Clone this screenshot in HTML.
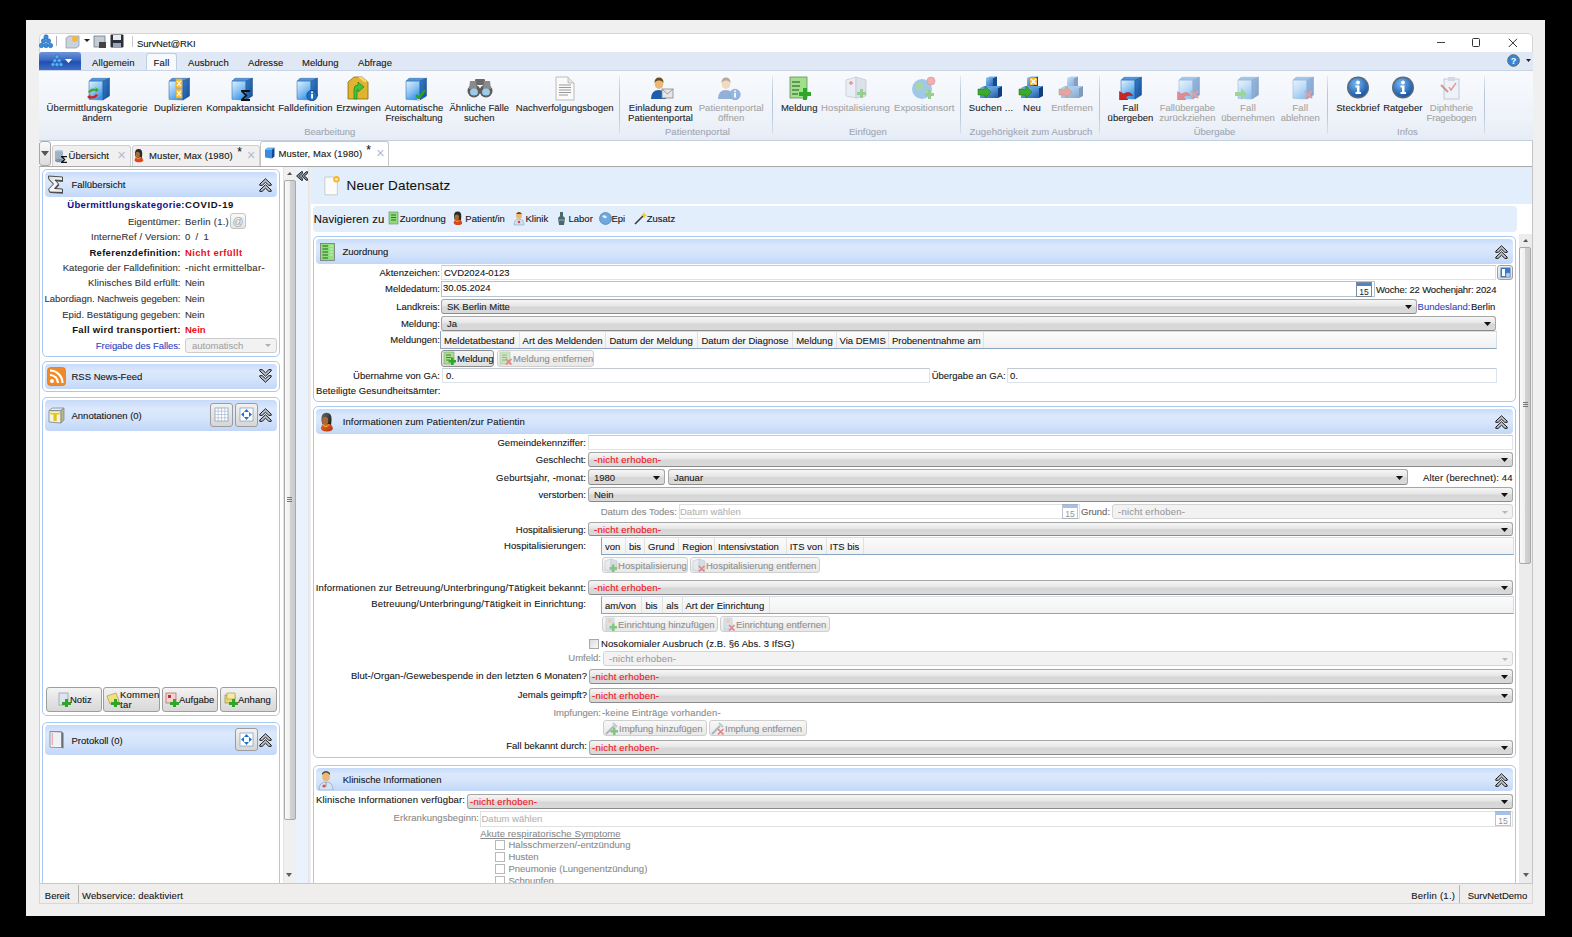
<!DOCTYPE html><html><head><meta charset="utf-8"><style>
html,body{margin:0;padding:0;width:1572px;height:937px;overflow:hidden;background:#000;font-family:"Liberation Sans", sans-serif;}
div,svg{position:absolute;box-sizing:border-box;}
.t{white-space:nowrap;color:#111;-webkit-text-stroke:0.1px currentColor;}

</style></head><body>
<div style="left:26px;top:20px;width:1519px;height:896px;background:#f0f0f0;"></div>
<div style="left:39px;top:33px;width:1494px;height:871px;background:#fff;border:1px solid #d6d6d6;border-radius:5px 5px 0 0;"></div>
<svg style="left:39px;top:34px" width="14" height="16" viewBox="0 0 14 16"><g fill="#3a8ee0" stroke="#1b5fa8" stroke-width="0.6"><circle cx="7" cy="3" r="2.2"/><circle cx="4.5" cy="7" r="2.2"/><circle cx="9.5" cy="7" r="2.2"/><circle cx="2.5" cy="11.5" r="2.2"/><circle cx="7" cy="11.5" r="2.2"/><circle cx="11.5" cy="11.5" r="2.2"/></g></svg>
<div style="left:56px;top:36px;width:1px;height:10px;background:#b0b0b0;"></div>
<svg style="left:65px;top:35px" width="15" height="14" viewBox="0 0 15 14"><path d="M1 3 L4 1 L14 1 L14 11 L11 13 L1 13Z" fill="#c9d3de" stroke="#8a97a6" stroke-width="0.7"/><circle cx="10" cy="4" r="3" fill="#f5b93a"/></svg>
<svg style="left:84px;top:39px" width="6" height="4"><path d="M0 0 L6 0 L3 3Z" fill="#222"/></svg>
<svg style="left:93px;top:35px" width="14" height="14" viewBox="0 0 14 14"><rect x="1" y="1" width="11" height="11" fill="#c4ccd6" stroke="#6f7c8c" stroke-width="0.8"/><rect x="6" y="7" width="7" height="6" fill="#444"/></svg>
<svg style="left:110px;top:34px" width="14" height="15" viewBox="0 0 14 15"><rect x="0.5" y="0.5" width="13" height="13" rx="1" fill="#2a2f3a"/><rect x="3" y="1" width="8" height="5" fill="#e8ecf2"/><rect x="3" y="9" width="8" height="4.5" fill="#9aa6b5"/></svg>
<div style="left:132px;top:36px;width:1px;height:11px;background:#c8c8c8;"></div>
<div class="t" style="left:137px;top:38.0px;font-size:9.5px;line-height:11px;color:#151515;letter-spacing:-0.121px;">SurvNet@RKI</div>
<div style="left:1437px;top:42px;width:8px;height:1px;background:#444;"></div>
<div style="left:1472px;top:38px;width:8px;height:9px;border:1px solid #333;border-radius:1.5px;"></div>
<svg style="left:1507.5px;top:38px" width="10" height="10" viewBox="0 0 10 10"><path d="M0.8 0.8 L9 9 M9 0.8 L0.8 9" stroke="#333" stroke-width="1"/></svg>
<div style="left:39px;top:52px;width:1494px;height:18px;background:#dfe8f4;"></div>
<div style="left:39px;top:52px;width:42px;height:18px;background:linear-gradient(#6d95d8,#3a69c4 45%,#1f4fb0 55%,#3f6fc8);border-radius:3px 3px 0 0;"></div>
<svg style="left:51px;top:54px" width="14" height="14" viewBox="0 0 14 14"><g fill="#58b0f5" stroke="#1c5aa6" stroke-width="0.5"><circle cx="6" cy="2.8" r="2"/><circle cx="3.8" cy="6.6" r="2"/><circle cx="8.2" cy="6.6" r="2"/><circle cx="2" cy="10.6" r="2"/><circle cx="6" cy="10.6" r="2"/><circle cx="10" cy="10.6" r="2"/></g></svg>
<svg style="left:65px;top:59px" width="7" height="4"><path d="M0 0 L7 0 L3.5 4Z" fill="#fff"/></svg>
<div style="left:146px;top:53px;width:31px;height:18px;background:#f6f9fd;border:1px solid #bfcde0;border-bottom:none;border-radius:3px 3px 0 0;"></div>
<div class="t" style="left:92px;top:57.2px;font-size:9.5px;line-height:11px;color:#151515;letter-spacing:0.110px;">Allgemein</div>
<div class="t" style="left:153.5px;top:57.2px;font-size:9.5px;line-height:11px;color:#151515;letter-spacing:0.196px;">Fall</div>
<div class="t" style="left:188px;top:57.2px;font-size:9.5px;line-height:11px;color:#151515;letter-spacing:0.080px;">Ausbruch</div>
<div class="t" style="left:248px;top:57.2px;font-size:9.5px;line-height:11px;color:#151515;letter-spacing:0.073px;">Adresse</div>
<div class="t" style="left:302px;top:57.2px;font-size:9.5px;line-height:11px;color:#151515;letter-spacing:0.008px;">Meldung</div>
<div class="t" style="left:358px;top:57.2px;font-size:9.5px;line-height:11px;color:#151515;letter-spacing:0.120px;">Abfrage</div>
<svg style="left:1507px;top:54px" width="13" height="13" viewBox="0 0 13 13"><circle cx="6.5" cy="6.5" r="5.8" fill="#3a86d0" stroke="#5a6470" stroke-width="1"/><text x="6.5" y="10" font-size="9" font-weight="bold" text-anchor="middle" fill="#fff" font-family="Liberation Sans">?</text></svg>
<svg style="left:1526px;top:59px" width="5" height="3"><path d="M0 0 L5 0 L2.5 3Z" fill="#222"/></svg>
<div style="left:39px;top:70px;width:1494px;height:71px;background:linear-gradient(#f8fafd,#eef2f9 70%,#e6ecf6);border-bottom:1px solid #c3d0e2;border-top:1px solid #c8d5e6;"></div>
<svg style="left:86px;top:77px;opacity:1.0" width="24" height="24" viewBox="0 0 24 24"><defs><linearGradient id="g1" x1="0" y1="0" x2="0.6" y2="1"><stop offset="0" stop-color="#e2f1fd"/><stop offset="0.55" stop-color="#8cc4f4"/><stop offset="1" stop-color="#3a94e6"/></linearGradient><linearGradient id="g2" x1="0" y1="0" x2="1" y2="1"><stop offset="0" stop-color="#3580cc"/><stop offset="1" stop-color="#174c92"/></linearGradient></defs><path d="M3 4.2 L6 1.3 L23.5 1.3 L17 4.2Z" fill="#4f96dc" stroke="#2a64a8" stroke-width="0.5"/><path d="M3 4.2 L17 4.2 L17 23 L3 22.3Z" fill="url(#g1)" stroke="#3a78b8" stroke-width="0.6"/><path d="M17 4.2 L23.5 1.3 L23.5 19 L17 23Z" fill="url(#g2)" stroke="#1a4a86" stroke-width="0.5"/><path d="M2 15 Q5 10 10 12 L9 10 L13 13 L9 16 L10 14 Q6 13 4 16Z" fill="#3caa2a"/><path d="M12 18 Q9 23 4 21 L5 23 L1 20 L5 17 L4 19 Q8 20 10 17Z" fill="#d42020"/></svg>
<div class="t" style="left:27.0px;top:101.8px;width:140px;text-align:center;font-size:9.5px;line-height:11px;color:#1e1e1e;letter-spacing:0.158px;text-indent:0.158px;"><span style="position:static">Übermittlungskategorie</span></div>
<div class="t" style="left:27.0px;top:111.9px;width:140px;text-align:center;font-size:9.5px;line-height:11px;color:#1e1e1e;"><span style="position:static">ändern</span></div>
<svg style="left:166px;top:77px;opacity:1.0" width="24" height="24" viewBox="0 0 24 24"><defs><linearGradient id="g3" x1="0" y1="0" x2="0.6" y2="1"><stop offset="0" stop-color="#e2f1fd"/><stop offset="0.55" stop-color="#8cc4f4"/><stop offset="1" stop-color="#3a94e6"/></linearGradient><linearGradient id="g4" x1="0" y1="0" x2="1" y2="1"><stop offset="0" stop-color="#3580cc"/><stop offset="1" stop-color="#174c92"/></linearGradient></defs><path d="M3 4.2 L6 1.3 L23.5 1.3 L17 4.2Z" fill="#4f96dc" stroke="#2a64a8" stroke-width="0.5"/><path d="M3 4.2 L17 4.2 L17 23 L3 22.3Z" fill="url(#g3)" stroke="#3a78b8" stroke-width="0.6"/><path d="M17 4.2 L23.5 1.3 L23.5 19 L17 23Z" fill="url(#g4)" stroke="#1a4a86" stroke-width="0.5"/><g fill="#f6c23a" stroke="#f59b1a" stroke-width="0.6"><rect x="10" y="2" width="6" height="9"/><rect x="10" y="12" width="6" height="9"/></g><path d="M11 4 L15 9 M15 4 L11 9 M11 14 L15 19 M15 14 L11 19" stroke="#fff" stroke-width="1.2"/></svg>
<div class="t" style="left:108.0px;top:101.8px;width:140px;text-align:center;font-size:9.5px;line-height:11px;color:#1e1e1e;letter-spacing:0.057px;text-indent:0.057px;"><span style="position:static">Duplizieren</span></div>
<svg style="left:229px;top:77px;opacity:1.0" width="24" height="24" viewBox="0 0 24 24"><defs><linearGradient id="g5" x1="0" y1="0" x2="0.6" y2="1"><stop offset="0" stop-color="#e2f1fd"/><stop offset="0.55" stop-color="#8cc4f4"/><stop offset="1" stop-color="#3a94e6"/></linearGradient><linearGradient id="g6" x1="0" y1="0" x2="1" y2="1"><stop offset="0" stop-color="#3580cc"/><stop offset="1" stop-color="#174c92"/></linearGradient></defs><path d="M3 4.2 L6 1.3 L23.5 1.3 L17 4.2Z" fill="#4f96dc" stroke="#2a64a8" stroke-width="0.5"/><path d="M3 4.2 L17 4.2 L17 23 L3 22.3Z" fill="url(#g5)" stroke="#3a78b8" stroke-width="0.6"/><path d="M17 4.2 L23.5 1.3 L23.5 19 L17 23Z" fill="url(#g6)" stroke="#1a4a86" stroke-width="0.5"/><path d="M12 13 L21 13 L21 15 L15 15 L18.5 18.5 L15 22 L21 22 L21 24 L12 24 L12 22.5 L16 18.5 L12 14.5Z" fill="#111"/></svg>
<div class="t" style="left:170.3px;top:101.8px;width:140px;text-align:center;font-size:9.5px;line-height:11px;color:#1e1e1e;letter-spacing:0.054px;text-indent:0.054px;"><span style="position:static">Kompaktansicht</span></div>
<svg style="left:294px;top:77px;opacity:1.0" width="24" height="24" viewBox="0 0 24 24"><defs><linearGradient id="g7" x1="0" y1="0" x2="0.6" y2="1"><stop offset="0" stop-color="#e2f1fd"/><stop offset="0.55" stop-color="#8cc4f4"/><stop offset="1" stop-color="#3a94e6"/></linearGradient><linearGradient id="g8" x1="0" y1="0" x2="1" y2="1"><stop offset="0" stop-color="#3580cc"/><stop offset="1" stop-color="#174c92"/></linearGradient></defs><path d="M3 4.2 L6 1.3 L23.5 1.3 L17 4.2Z" fill="#4f96dc" stroke="#2a64a8" stroke-width="0.5"/><path d="M3 4.2 L17 4.2 L17 23 L3 22.3Z" fill="url(#g7)" stroke="#3a78b8" stroke-width="0.6"/><path d="M17 4.2 L23.5 1.3 L23.5 19 L17 23Z" fill="url(#g8)" stroke="#1a4a86" stroke-width="0.5"/><circle cx="18" cy="18.5" r="5.2" fill="#1e6fc4" stroke="#0b3e82" stroke-width="0.7"/><rect x="17.1" y="17" width="1.9" height="4.5" fill="#fff"/><circle cx="18" cy="15.3" r="1" fill="#fff"/></svg>
<div class="t" style="left:235.39999999999998px;top:101.8px;width:140px;text-align:center;font-size:9.5px;line-height:11px;color:#1e1e1e;letter-spacing:0.089px;text-indent:0.089px;"><span style="position:static">Falldefinition</span></div>
<svg style="left:346px;top:76px" width="24" height="25" viewBox="0 0 24 25"><path d="M2 6 L8 1 L16 1 L22 6 L22 23 L2 23Z" fill="#e0b430" stroke="#8a6a10" stroke-width="0.8"/><path d="M12 1 L16 1 L22 6 L18 6Z" fill="#f7d870"/><path d="M8 23 L8 13 Q8 9 12 9 L12 6 L18 11 L12 16 L12 13 Q11 13 11 15 L11 23Z" fill="#43c23a" stroke="#1f7a1a" stroke-width="0.6"/></svg>
<div class="t" style="left:288.5px;top:101.8px;width:140px;text-align:center;font-size:9.5px;line-height:11px;color:#1e1e1e;letter-spacing:0.030px;text-indent:0.030px;"><span style="position:static">Erzwingen</span></div>
<svg style="left:403px;top:77px;opacity:1.0" width="24" height="24" viewBox="0 0 24 24"><defs><linearGradient id="g9" x1="0" y1="0" x2="0.6" y2="1"><stop offset="0" stop-color="#e2f1fd"/><stop offset="0.55" stop-color="#8cc4f4"/><stop offset="1" stop-color="#3a94e6"/></linearGradient><linearGradient id="g10" x1="0" y1="0" x2="1" y2="1"><stop offset="0" stop-color="#3580cc"/><stop offset="1" stop-color="#174c92"/></linearGradient></defs><path d="M3 4.2 L6 1.3 L23.5 1.3 L17 4.2Z" fill="#4f96dc" stroke="#2a64a8" stroke-width="0.5"/><path d="M3 4.2 L17 4.2 L17 23 L3 22.3Z" fill="url(#g9)" stroke="#3a78b8" stroke-width="0.6"/><path d="M17 4.2 L23.5 1.3 L23.5 19 L17 23Z" fill="url(#g10)" stroke="#1a4a86" stroke-width="0.5"/><path d="M13 18 L16 21 L22 13" stroke="#2aa02a" stroke-width="2.4" fill="none"/><path d="M14 22 L17 22 L17 24 L14 24Z" fill="#ccc"/></svg>
<div class="t" style="left:344.0px;top:101.8px;width:140px;text-align:center;font-size:9.5px;line-height:11px;color:#1e1e1e;letter-spacing:0.103px;text-indent:0.103px;"><span style="position:static">Automatische</span></div>
<div class="t" style="left:344.0px;top:111.9px;width:140px;text-align:center;font-size:9.5px;line-height:11px;color:#1e1e1e;"><span style="position:static">Freischaltung</span></div>
<svg style="left:467px;top:77px" width="26" height="22" viewBox="0 0 26 22"><rect x="8" y="2" width="10" height="6" rx="1" fill="#6a6a6a"/><ellipse cx="7" cy="14" rx="6.5" ry="6.5" fill="#5c5c5c"/><ellipse cx="19" cy="14" rx="6.5" ry="6.5" fill="#5c5c5c"/><path d="M3 4 L9 4 L10 12 L2 12Z" fill="#8a8a8a"/><path d="M17 4 L23 4 L24 12 L16 12Z" fill="#8a8a8a"/><ellipse cx="7" cy="15" rx="4" ry="3.5" fill="#9ccbe8"/><ellipse cx="19" cy="15" rx="4" ry="3.5" fill="#9ccbe8"/></svg>
<div class="t" style="left:409.3px;top:101.8px;width:140px;text-align:center;font-size:9.5px;line-height:11px;color:#1e1e1e;letter-spacing:-0.013px;text-indent:-0.013px;"><span style="position:static">Ähnliche Fälle</span></div>
<div class="t" style="left:409.3px;top:111.9px;width:140px;text-align:center;font-size:9.5px;line-height:11px;color:#1e1e1e;"><span style="position:static">suchen</span></div>
<svg style="left:555px;top:76px" width="20" height="25" viewBox="0 0 20 25"><path d="M1 1 L13 1 L19 7 L19 24 L1 24Z" fill="#fafafa" stroke="#b4b4b4" stroke-width="0.9"/><path d="M13 1 L13 7 L19 7" fill="#e4e4e4" stroke="#b4b4b4" stroke-width="0.8"/><g stroke="#9a9a9a" stroke-width="1"><path d="M4 9 H16 M4 11.5 H16 M4 14 H16 M4 16.5 H16 M4 19 H13"/></g></svg>
<div class="t" style="left:494.70000000000005px;top:101.8px;width:140px;text-align:center;font-size:9.5px;line-height:11px;color:#1e1e1e;letter-spacing:-0.001px;text-indent:-0.001px;"><span style="position:static">Nachverfolgungsbogen</span></div>
<div class="t" style="left:229.8px;top:126.0px;width:200px;text-align:center;font-size:9.5px;line-height:11px;color:#9fa7b4;"><span style="position:static">Bearbeitung</span></div>
<div style="left:619px;top:76px;width:1px;height:58px;background:linear-gradient(rgba(180,195,215,0.3),#b9c7da 30%,#b9c7da 70%,rgba(180,195,215,0.3));"></div>
<svg style="left:650px;top:76px;opacity:1.0" width="24" height="24" viewBox="0 0 24 24"><path d="M1 23 Q1 14 9 14 Q16 14 16 23Z" fill="#1f5ea8"/><ellipse cx="9" cy="8" rx="4.3" ry="5" fill="#eab97a"/><path d="M4.5 7 Q4.5 1.5 9 1.5 Q13.5 1.5 13.5 7 Q12 4 9 4.5 Q6 4 4.5 7Z" fill="#6b4a1e"/><rect x="12" y="13" width="11" height="9" fill="#e6e6e6" stroke="#888" stroke-width="0.8"/><path d="M12 13 L17.5 18 L23 13" stroke="#888" stroke-width="0.8" fill="none"/></svg>
<div class="t" style="left:590.5px;top:101.8px;width:140px;text-align:center;font-size:9.5px;line-height:11px;color:#1e1e1e;letter-spacing:0.045px;text-indent:0.045px;"><span style="position:static">Einladung zum</span></div>
<div class="t" style="left:590.5px;top:111.9px;width:140px;text-align:center;font-size:9.5px;line-height:11px;color:#1e1e1e;letter-spacing:0.077px;text-indent:0.077px;"><span style="position:static">Patientenportal</span></div>
<svg style="left:717px;top:76px;opacity:0.45" width="24" height="24" viewBox="0 0 24 24"><path d="M1 23 Q1 14 9 14 Q16 14 16 23Z" fill="#1f5ea8"/><ellipse cx="9" cy="8" rx="4.3" ry="5" fill="#eab97a"/><path d="M4.5 7 Q4.5 1.5 9 1.5 Q13.5 1.5 13.5 7 Q12 4 9 4.5 Q6 4 4.5 7Z" fill="#6b4a1e"/><circle cx="18" cy="18.5" r="5.2" fill="#1e6fc4" stroke="#0b3e82" stroke-width="0.7"/><rect x="17.1" y="17" width="1.9" height="4.5" fill="#fff"/><circle cx="18" cy="15.3" r="1" fill="#fff"/></svg>
<div class="t" style="left:661.2px;top:101.8px;width:140px;text-align:center;font-size:9.5px;line-height:11px;color:#a5a5a5;letter-spacing:0.077px;text-indent:0.077px;"><span style="position:static">Patientenportal</span></div>
<div class="t" style="left:661.2px;top:111.9px;width:140px;text-align:center;font-size:9.5px;line-height:11px;color:#a5a5a5;"><span style="position:static">öffnen</span></div>
<div class="t" style="left:597.4px;top:126.0px;width:200px;text-align:center;font-size:9.5px;line-height:11px;color:#9fa7b4;letter-spacing:0.077px;text-indent:0.077px;"><span style="position:static">Patientenportal</span></div>
<div style="left:772px;top:76px;width:1px;height:58px;background:linear-gradient(rgba(180,195,215,0.3),#b9c7da 30%,#b9c7da 70%,rgba(180,195,215,0.3));"></div>
<svg style="left:789px;top:76px" width="24" height="24" viewBox="0 0 24 24"><rect x="1" y="1" width="17" height="21" fill="#9fe08a" stroke="#6a8a60" stroke-width="0.8"/><g stroke="#2e4a2a" stroke-width="1.1"><path d="M3 6 H11 M3 10 H11 M3 14 H10 M3 18 H9"/></g><path d="M14 12 H18 V16 H22 V20 H18 V24 H14 V20 H10 V16 H14Z" fill="#2fa52a"/></svg>
<div class="t" style="left:729.2px;top:101.8px;width:140px;text-align:center;font-size:9.5px;line-height:11px;color:#1e1e1e;letter-spacing:0.008px;text-indent:0.008px;"><span style="position:static">Meldung</span></div>
<svg style="left:844px;top:76px;opacity:0.5" width="25" height="24" viewBox="0 0 25 24"><path d="M2 4 L12 1 L12 22 L2 20Z" fill="#dfe6ee" stroke="#8a98a8" stroke-width="0.7"/><path d="M12 1 L22 4 L22 20 L12 22Z" fill="#c2ccd8" stroke="#8a98a8" stroke-width="0.7"/><path d="M5 7 H9 M7 5 V9" stroke="#e03030" stroke-width="1.5"/><path d="M16 13 H19 V16 H22 V19 H19 V22 H16 V19 H13 V16 H16Z" fill="#3caa2a"/></svg>
<div class="t" style="left:785.5px;top:101.8px;width:140px;text-align:center;font-size:9.5px;line-height:11px;color:#a5a5a5;letter-spacing:0.080px;text-indent:0.080px;"><span style="position:static">Hospitalisierung</span></div>
<svg style="left:911px;top:76px;opacity:0.5" width="26" height="24" viewBox="0 0 26 24"><circle cx="11" cy="13" r="10" fill="#4f9ad8"/><path d="M4 9 Q8 5 12 8 Q14 12 9 14 Q5 16 4 9Z M13 15 Q17 13 19 17 Q15 21 13 15Z" fill="#5cb84a"/><circle cx="20" cy="5" r="4" fill="#ef6a6a" stroke="#b03030" stroke-width="0.6"/><path d="M17 14 H20 V17 H23 V20 H20 V23 H17 V20 H14 V17 H17Z" fill="#3caa2a"/></svg>
<div class="t" style="left:854.2px;top:101.8px;width:140px;text-align:center;font-size:9.5px;line-height:11px;color:#a5a5a5;letter-spacing:0.041px;text-indent:0.041px;"><span style="position:static">Expositionsort</span></div>
<div class="t" style="left:767.9px;top:126.0px;width:200px;text-align:center;font-size:9.5px;line-height:11px;color:#9fa7b4;letter-spacing:0.041px;text-indent:0.041px;"><span style="position:static">Einfügen</span></div>
<div style="left:960px;top:76px;width:1px;height:58px;background:linear-gradient(rgba(180,195,215,0.3),#b9c7da 30%,#b9c7da 70%,rgba(180,195,215,0.3));"></div>
<svg style="left:977px;top:76px;opacity:1.0" width="26" height="24" viewBox="0 0 26 24"><defs><linearGradient id="g11" x1="0" y1="0" x2="1" y2="1"><stop offset="0" stop-color="#8cc6f5"/><stop offset="1" stop-color="#1a5aa8"/></linearGradient></defs><path d="M9 2 L13 0.5 L20 0.5 L16 2Z" fill="#6ab0ee"/><rect x="9" y="2" width="7" height="10" fill="url(#g11)"/><path d="M16 2 L20 0.5 L20 10 L16 12Z" fill="#174a8e"/><path d="M3 12 L7 10 L25 10 L21 12Z" fill="#5aa2e8"/><rect x="3" y="12" width="18" height="10" fill="url(#g11)"/><path d="M21 12 L25 10 L25 20 L21 22Z" fill="#123f7c"/><path d="M1 13 L8 13 L8 10 L14 16 L8 22 L8 19 L1 19Z" fill="#3caa2a" stroke="#1f6a1a" stroke-width="0.5"/></svg>
<div class="t" style="left:920.9px;top:101.8px;width:140px;text-align:center;font-size:9.5px;line-height:11px;color:#1e1e1e;letter-spacing:0.180px;text-indent:0.180px;"><span style="position:static">Suchen ...</span></div>
<svg style="left:1018px;top:76px;opacity:1.0" width="26" height="24" viewBox="0 0 26 24"><defs><linearGradient id="g12" x1="0" y1="0" x2="1" y2="1"><stop offset="0" stop-color="#8cc6f5"/><stop offset="1" stop-color="#1a5aa8"/></linearGradient></defs><path d="M9 2 L13 0.5 L20 0.5 L16 2Z" fill="#6ab0ee"/><rect x="9" y="2" width="7" height="10" fill="url(#g12)"/><path d="M16 2 L20 0.5 L20 10 L16 12Z" fill="#174a8e"/><path d="M3 12 L7 10 L25 10 L21 12Z" fill="#5aa2e8"/><rect x="3" y="12" width="18" height="10" fill="url(#g12)"/><path d="M21 12 L25 10 L25 20 L21 22Z" fill="#123f7c"/><rect x="12" y="2" width="7" height="7" fill="#f6b93a"/><path d="M13 3 L18 8 M18 3 L13 8" stroke="#fff" stroke-width="1.2"/><path d="M1 13 L8 13 L8 10 L14 16 L8 22 L8 19 L1 19Z" fill="#3caa2a" stroke="#1f6a1a" stroke-width="0.5"/></svg>
<div class="t" style="left:962.0px;top:101.8px;width:140px;text-align:center;font-size:9.5px;line-height:11px;color:#1e1e1e;letter-spacing:0.181px;text-indent:0.181px;"><span style="position:static">Neu</span></div>
<svg style="left:1058px;top:76px;opacity:0.5" width="26" height="24" viewBox="0 0 26 24"><defs><linearGradient id="g13" x1="0" y1="0" x2="1" y2="1"><stop offset="0" stop-color="#8cc6f5"/><stop offset="1" stop-color="#1a5aa8"/></linearGradient></defs><path d="M9 2 L13 0.5 L20 0.5 L16 2Z" fill="#6ab0ee"/><rect x="9" y="2" width="7" height="10" fill="url(#g13)"/><path d="M16 2 L20 0.5 L20 10 L16 12Z" fill="#174a8e"/><path d="M3 12 L7 10 L25 10 L21 12Z" fill="#5aa2e8"/><rect x="3" y="12" width="18" height="10" fill="url(#g13)"/><path d="M21 12 L25 10 L25 20 L21 22Z" fill="#123f7c"/><path d="M1 13 L8 13 L8 10 L14 16 L8 22 L8 19 L1 19Z" fill="#e05050" stroke="#1f6a1a" stroke-width="0.5"/></svg>
<div class="t" style="left:1002.0px;top:101.8px;width:140px;text-align:center;font-size:9.5px;line-height:11px;color:#a5a5a5;letter-spacing:0.062px;text-indent:0.062px;"><span style="position:static">Entfernen</span></div>
<div class="t" style="left:931.0px;top:126.0px;width:200px;text-align:center;font-size:9.5px;line-height:11px;color:#9fa7b4;letter-spacing:0.096px;text-indent:0.096px;"><span style="position:static">Zugehörigkeit zum Ausbruch</span></div>
<div style="left:1099px;top:76px;width:1px;height:58px;background:linear-gradient(rgba(180,195,215,0.3),#b9c7da 30%,#b9c7da 70%,rgba(180,195,215,0.3));"></div>
<svg style="left:1118px;top:76px;opacity:1.0" width="24" height="24" viewBox="0 0 24 24"><defs><linearGradient id="g14" x1="0" y1="0" x2="0.6" y2="1"><stop offset="0" stop-color="#e2f1fd"/><stop offset="0.55" stop-color="#8cc4f4"/><stop offset="1" stop-color="#3a94e6"/></linearGradient><linearGradient id="g15" x1="0" y1="0" x2="1" y2="1"><stop offset="0" stop-color="#3580cc"/><stop offset="1" stop-color="#174c92"/></linearGradient></defs><path d="M3 4.2 L6 1.3 L23.5 1.3 L17 4.2Z" fill="#4f96dc" stroke="#2a64a8" stroke-width="0.5"/><path d="M3 4.2 L17 4.2 L17 23 L3 22.3Z" fill="url(#g14)" stroke="#3a78b8" stroke-width="0.6"/><path d="M17 4.2 L23.5 1.3 L23.5 19 L17 23Z" fill="url(#g15)" stroke="#1a4a86" stroke-width="0.5"/><path d="M1.5 15.5 L1.5 24 L10 24 L7.5 21 Q10 18.5 14.5 19.5 Q12 14.5 5.5 18Z" fill="#cf2222" stroke="#8a1010" stroke-width="0.5"/></svg>
<div class="t" style="left:1060.5px;top:101.8px;width:140px;text-align:center;font-size:9.5px;line-height:11px;color:#1e1e1e;letter-spacing:0.196px;text-indent:0.196px;"><span style="position:static">Fall</span></div>
<div class="t" style="left:1060.5px;top:111.9px;width:140px;text-align:center;font-size:9.5px;line-height:11px;color:#1e1e1e;letter-spacing:0.045px;text-indent:0.045px;"><span style="position:static">übergeben</span></div>
<svg style="left:1176px;top:76px;opacity:0.5" width="24" height="24" viewBox="0 0 24 24"><defs><linearGradient id="g16" x1="0" y1="0" x2="0.6" y2="1"><stop offset="0" stop-color="#e2f1fd"/><stop offset="0.55" stop-color="#8cc4f4"/><stop offset="1" stop-color="#3a94e6"/></linearGradient><linearGradient id="g17" x1="0" y1="0" x2="1" y2="1"><stop offset="0" stop-color="#3580cc"/><stop offset="1" stop-color="#174c92"/></linearGradient></defs><path d="M3 4.2 L6 1.3 L23.5 1.3 L17 4.2Z" fill="#4f96dc" stroke="#2a64a8" stroke-width="0.5"/><path d="M3 4.2 L17 4.2 L17 23 L3 22.3Z" fill="url(#g16)" stroke="#3a78b8" stroke-width="0.6"/><path d="M17 4.2 L23.5 1.3 L23.5 19 L17 23Z" fill="url(#g17)" stroke="#1a4a86" stroke-width="0.5"/><path d="M1.5 15.5 L1.5 24 L10 24 L7.5 21 Q10 18.5 14.5 19.5 Q12 14.5 5.5 18Z" fill="#cf2222" stroke="#8a1010" stroke-width="0.5"/><path d="M15 15 L22 22 M22 15 L15 22" stroke="#e04040" stroke-width="2.4"/></svg>
<div class="t" style="left:1117.4px;top:101.8px;width:140px;text-align:center;font-size:9.5px;line-height:11px;color:#a5a5a5;"><span style="position:static">Fallübergabe</span></div>
<div class="t" style="left:1117.4px;top:111.9px;width:140px;text-align:center;font-size:9.5px;line-height:11px;color:#a5a5a5;letter-spacing:0.020px;text-indent:0.020px;"><span style="position:static">zurückziehen</span></div>
<svg style="left:1235px;top:76px;opacity:0.5" width="24" height="24" viewBox="0 0 24 24"><defs><linearGradient id="g18" x1="0" y1="0" x2="0.6" y2="1"><stop offset="0" stop-color="#e2f1fd"/><stop offset="0.55" stop-color="#8cc4f4"/><stop offset="1" stop-color="#3a94e6"/></linearGradient><linearGradient id="g19" x1="0" y1="0" x2="1" y2="1"><stop offset="0" stop-color="#3580cc"/><stop offset="1" stop-color="#174c92"/></linearGradient></defs><path d="M3 4.2 L6 1.3 L23.5 1.3 L17 4.2Z" fill="#4f96dc" stroke="#2a64a8" stroke-width="0.5"/><path d="M3 4.2 L17 4.2 L17 23 L3 22.3Z" fill="url(#g18)" stroke="#3a78b8" stroke-width="0.6"/><path d="M17 4.2 L23.5 1.3 L23.5 19 L17 23Z" fill="url(#g19)" stroke="#1a4a86" stroke-width="0.5"/><path d="M0 16 L6 16 L6 12 L12 18 L6 24 L6 20 L0 20Z" fill="#43b83a"/></svg>
<div class="t" style="left:1178.0px;top:101.8px;width:140px;text-align:center;font-size:9.5px;line-height:11px;color:#a5a5a5;letter-spacing:0.196px;text-indent:0.196px;"><span style="position:static">Fall</span></div>
<div class="t" style="left:1178.0px;top:111.9px;width:140px;text-align:center;font-size:9.5px;line-height:11px;color:#a5a5a5;letter-spacing:0.038px;text-indent:0.038px;"><span style="position:static">übernehmen</span></div>
<svg style="left:1290px;top:76px;opacity:0.5" width="24" height="24" viewBox="0 0 24 24"><defs><linearGradient id="g20" x1="0" y1="0" x2="0.6" y2="1"><stop offset="0" stop-color="#e2f1fd"/><stop offset="0.55" stop-color="#8cc4f4"/><stop offset="1" stop-color="#3a94e6"/></linearGradient><linearGradient id="g21" x1="0" y1="0" x2="1" y2="1"><stop offset="0" stop-color="#3580cc"/><stop offset="1" stop-color="#174c92"/></linearGradient></defs><path d="M3 4.2 L6 1.3 L23.5 1.3 L17 4.2Z" fill="#4f96dc" stroke="#2a64a8" stroke-width="0.5"/><path d="M3 4.2 L17 4.2 L17 23 L3 22.3Z" fill="url(#g20)" stroke="#3a78b8" stroke-width="0.6"/><path d="M17 4.2 L23.5 1.3 L23.5 19 L17 23Z" fill="url(#g21)" stroke="#1a4a86" stroke-width="0.5"/><path d="M15 15 L22 22 M22 15 L15 22" stroke="#e04040" stroke-width="2.4"/></svg>
<div class="t" style="left:1230.2px;top:101.8px;width:140px;text-align:center;font-size:9.5px;line-height:11px;color:#a5a5a5;letter-spacing:0.196px;text-indent:0.196px;"><span style="position:static">Fall</span></div>
<div class="t" style="left:1230.2px;top:111.9px;width:140px;text-align:center;font-size:9.5px;line-height:11px;color:#a5a5a5;letter-spacing:-0.001px;text-indent:-0.001px;"><span style="position:static">ablehnen</span></div>
<div class="t" style="left:1114.5px;top:126.0px;width:200px;text-align:center;font-size:9.5px;line-height:11px;color:#9fa7b4;"><span style="position:static">Übergabe</span></div>
<div style="left:1327px;top:76px;width:1px;height:58px;background:linear-gradient(rgba(180,195,215,0.3),#b9c7da 30%,#b9c7da 70%,rgba(180,195,215,0.3));"></div>
<svg style="left:1346px;top:76px" width="24" height="24" viewBox="0 0 24 24"><defs><radialGradient id="g22" cx="0.4" cy="0.3" r="0.7"><stop offset="0" stop-color="#7ab8f0"/><stop offset="1" stop-color="#1656a8"/></radialGradient></defs><circle cx="12" cy="11.5" r="11" fill="#5a6a7a"/><circle cx="12" cy="11.5" r="9.6" fill="url(#g22)"/><circle cx="12" cy="6.5" r="1.9" fill="#fff"/><path d="M9.5 9.5 H13.5 V16 H15 V18 H9.5 V16 H11 V11.5 H9.5Z" fill="#fff"/></svg>
<div class="t" style="left:1287.9px;top:101.8px;width:140px;text-align:center;font-size:9.5px;line-height:11px;color:#1e1e1e;letter-spacing:0.139px;text-indent:0.139px;"><span style="position:static">Steckbrief</span></div>
<svg style="left:1391px;top:76px" width="24" height="24" viewBox="0 0 24 24"><defs><radialGradient id="g23" cx="0.4" cy="0.3" r="0.7"><stop offset="0" stop-color="#7ab8f0"/><stop offset="1" stop-color="#1656a8"/></radialGradient></defs><circle cx="12" cy="11.5" r="11" fill="#5a6a7a"/><circle cx="12" cy="11.5" r="9.6" fill="url(#g23)"/><circle cx="12" cy="6.5" r="1.9" fill="#fff"/><path d="M9.5 9.5 H13.5 V16 H15 V18 H9.5 V16 H11 V11.5 H9.5Z" fill="#fff"/></svg>
<div class="t" style="left:1332.8px;top:101.8px;width:140px;text-align:center;font-size:9.5px;line-height:11px;color:#1e1e1e;letter-spacing:0.015px;text-indent:0.015px;"><span style="position:static">Ratgeber</span></div>
<svg style="left:1440px;top:76px;opacity:0.5" width="22" height="24" viewBox="0 0 22 24"><rect x="4" y="3" width="15" height="20" fill="#e8eef6" stroke="#7a8aa0" stroke-width="0.8"/><rect x="8" y="1" width="7" height="4" fill="#b0bccc"/><path d="M9 11 L11 14 L16 7" stroke="#d03030" stroke-width="1.3" fill="none"/><path d="M1 9 L8 16" stroke="#c03030" stroke-width="2"/></svg>
<div class="t" style="left:1381.5px;top:101.8px;width:140px;text-align:center;font-size:9.5px;line-height:11px;color:#a5a5a5;"><span style="position:static">Diphtherie</span></div>
<div class="t" style="left:1381.5px;top:111.9px;width:140px;text-align:center;font-size:9.5px;line-height:11px;color:#a5a5a5;letter-spacing:-0.137px;text-indent:-0.137px;"><span style="position:static">Fragebogen</span></div>
<div class="t" style="left:1307.4px;top:126.0px;width:200px;text-align:center;font-size:9.5px;line-height:11px;color:#9fa7b4;"><span style="position:static">Infos</span></div>
<div style="left:1484px;top:76px;width:1px;height:58px;background:linear-gradient(rgba(180,195,215,0.3),#b9c7da 30%,#b9c7da 70%,rgba(180,195,215,0.3));"></div>
<div style="left:39px;top:141px;width:1494px;height:26px;background:#fff;border-bottom:1px solid #a9a9a9;"></div>
<div style="left:39px;top:141px;width:12px;height:25px;background:linear-gradient(#fafafa,#dcdcdc);border:1px solid #a8a8a8;border-radius:3px;"></div>
<svg style="left:41px;top:151px" width="8" height="5"><path d="M0 0 L8 0 L4 5Z" fill="#555"/></svg>
<div style="left:52px;top:145px;width:79px;height:21px;background:#f0f0f0;border:1px solid #cfcfcf;border-bottom:none;border-radius:3px 3px 0 0;"></div>
<svg style="left:54px;top:149px" width="14" height="14" viewBox="0 0 14 14"><ellipse cx="5" cy="2.5" rx="4" ry="1.8" fill="#b8c8d8"/><rect x="1" y="2.5" width="8" height="9" fill="#9fb2c6"/><ellipse cx="5" cy="11.5" rx="4" ry="1.8" fill="#7f94aa"/><path d="M7 7 H13 V8.3 H9.3 L11.5 10.5 L9.3 12.7 H13 V14 H7 V13 L9.8 10.5 L7 8Z" fill="#111"/></svg>
<div class="t" style="left:68.6px;top:150.2px;font-size:9.5px;line-height:11px;color:#151515;letter-spacing:0.034px;">Übersicht</div>
<div class="t" style="left:111.5px;top:147.0px;width:20px;text-align:center;font-size:14px;line-height:17px;color:#b4bcd0;"><span style="position:static">×</span></div>
<div style="left:132px;top:145px;width:128px;height:21px;background:#f0f0f0;border:1px solid #cfcfcf;border-bottom:none;border-radius:3px 3px 0 0;"></div>
<svg style="left:134px;top:147.5px" width="10" height="15" viewBox="0 0 14 20"><path d="M1.5 9 Q0.5 0.8 6.5 0.8 Q12 0.8 11.5 8 L11 13.5 L2.5 12.5Z" fill="#2a2a2a"/><ellipse cx="5.2" cy="8.8" rx="3.1" ry="4" fill="#a86a38"/><path d="M1 16.5 Q1 12.5 4.5 12 L9 12 Q12.5 12.5 12.8 16.5 Q12.5 19.5 7 19.5 Q1.5 19.5 1 16.5Z" fill="#d8481c"/><path d="M3.2 12.5 Q5.5 17 9.2 12.3" stroke="#f2c828" stroke-width="1" fill="none"/></svg>
<div class="t" style="left:149px;top:150.2px;font-size:9.5px;line-height:11px;color:#151515;letter-spacing:0.109px;">Muster, Max (1980)</div>
<div class="t" style="left:234.5px;top:145.0px;width:10px;text-align:center;font-size:12px;line-height:14px;color:#151515;"><span style="position:static">*</span></div>
<div class="t" style="left:241.0px;top:147.0px;width:20px;text-align:center;font-size:14px;line-height:17px;color:#b4bcd0;"><span style="position:static">×</span></div>
<div style="left:260px;top:141px;width:129px;height:25px;background:#fff;border:1px solid #c8c8c8;border-bottom:none;border-radius:3px 3px 0 0;"></div>
<svg style="left:264px;top:147px" width="11" height="12" viewBox="0 0 11 12"><path d="M1 2.5 L3.5 0.5 L10.5 0.5 L8 2.5Z" fill="#6ab4f0"/><path d="M1 2.5 L8 2.5 L8 11.5 L1 10.5Z" fill="#3a8ee0"/><path d="M8 2.5 L10.5 0.5 L10.5 9.5 L8 11.5Z" fill="#0e4a9a"/></svg>
<div class="t" style="left:278.4px;top:148.1px;font-size:9.5px;line-height:11px;color:#151515;letter-spacing:0.109px;">Muster, Max (1980)</div>
<div class="t" style="left:363.5px;top:143.0px;width:10px;text-align:center;font-size:12px;line-height:14px;color:#151515;"><span style="position:static">*</span></div>
<div class="t" style="left:370.3px;top:145.0px;width:20px;text-align:center;font-size:14px;line-height:17px;color:#b4bcd0;"><span style="position:static">×</span></div>
<div style="left:39px;top:167px;width:244px;height:716px;background:#fff;border-left:1px solid #cfcfcf;"></div>
<div style="left:283px;top:167px;width:13px;height:716px;background:#f0f0f0;border-left:1px solid #e4e4e4;"></div>
<svg style="left:287px;top:172px" width="5" height="3"><path d="M0 3 L5 3 L3 0Z" fill="#555"/></svg>
<div style="left:284px;top:180px;width:12px;height:640px;background:linear-gradient(90deg,#fafafa,#f0f0f0 45%,#d2d2d2 55%,#cacaca);border:1px solid #a9a9a9;border-radius:2px;"></div>
<div style="left:287px;top:497px;width:5px;height:1px;background:#777;"></div>
<div style="left:287px;top:499px;width:5px;height:1px;background:#777;"></div>
<div style="left:287px;top:501px;width:5px;height:1px;background:#777;"></div>
<svg style="left:286px;top:873px" width="6" height="4"><path d="M0 0 L6 0 L3 4Z" fill="#606060"/></svg>
<div style="left:296px;top:167px;width:13px;height:716px;background:#eaf3fd;"></div>
<svg style="left:296px;top:171px" width="12" height="10" viewBox="0 0 12 10"><g fill="#8a9098" stroke="#222" stroke-width="1"><path d="M5.5 0.6 L0.6 5 L5.5 9.4 L6.4 9.4 L6.4 7.6 L3.4 5 L6.4 2.4 L6.4 0.6Z"/><path d="M10.5 0.6 L5.6 5 L10.5 9.4 L11.4 9.4 L11.4 7.6 L8.4 5 L11.4 2.4 L11.4 0.6Z"/></g></svg>
<div style="left:308px;top:167px;width:3px;height:716px;background:linear-gradient(90deg,#e2e2e2,#f2f2f2);"></div>
<div style="left:311px;top:167px;width:1222px;height:716px;background:#fff;"></div>
<div style="left:311px;top:167px;width:1222px;height:37px;background:#e3eefc;"></div>
<div style="left:42px;top:169px;width:238px;height:188px;border:1px solid #a9c9f5;border-radius:5px;background:#fff;"></div>
<div style="left:45px;top:172px;width:232px;height:25px;background:linear-gradient(#c6dbf9,#dce8fc 28%,#d6e5fb 55%,#c2d7f8);border-radius:4px;"></div>
<svg style="left:47px;top:174px" width="18" height="21" viewBox="0 0 18 21"><defs><linearGradient id="sgm" x1="0" y1="0" x2="1" y2="1"><stop offset="0" stop-color="#cfd8de"/><stop offset="0.5" stop-color="#f8f8f8"/><stop offset="1" stop-color="#e4e4e4"/></linearGradient></defs><path d="M2 3.5 L16 4.5 L16 8 L9 7.5 L12.5 11 L8.5 15.5 L16 15.8 L16 19.8 L3 19 L2.2 16 L7 11 L2.2 6Z" fill="#555"/><path d="M1.5 2 L15.5 3 L15.5 6.5 L8 6 L11.5 10 L7.5 14.5 L15.5 15 L15.5 18.5 L2.5 18 L1.7 15 L6.5 10 L1.7 5Z" fill="url(#sgm)" stroke="#3a3a3a" stroke-width="0.9"/></svg>
<div class="t" style="left:71.5px;top:179.0px;font-size:9.5px;line-height:11px;color:#151515;">Fallübersicht</div>
<svg style="left:258.5px;top:177.5px" width="13" height="14" viewBox="0 0 13 14"><g fill="#c4c8ce" stroke="#111" stroke-width="1" stroke-linejoin="miter"><path d="M0.8 6.2 L6.5 0.8 L12.2 6.2 L12.2 7.3 L9.8 7.3 L6.5 4.2 L3.2 7.3 L0.8 7.3Z"/><path d="M0.8 12.2 L6.5 6.8 L12.2 12.2 L12.2 13.3 L9.8 13.3 L6.5 10.2 L3.2 13.3 L0.8 13.3Z"/></g></svg>
<div class="t" style="right:1387.5px;top:199.0px;text-align:right;font-size:9.5px;line-height:11px;color:#333;color:#10108a;font-weight:bold;letter-spacing:0.337px;margin-right:-0.337px;-webkit-text-stroke:0;">Übermittlungskategorie:</div>
<div class="t" style="left:185px;top:199.0px;font-size:9.5px;line-height:11px;color:#333;color:#111;font-weight:bold;letter-spacing:0.653px;-webkit-text-stroke:0;">COVID-19</div>
<div class="t" style="right:1391.5px;top:215.7px;text-align:right;font-size:9.5px;line-height:11px;color:#333;letter-spacing:0.137px;margin-right:-0.137px;">Eigentümer:</div>
<div class="t" style="left:185px;top:215.7px;font-size:9.5px;line-height:11px;color:#333;letter-spacing:0.261px;">Berlin (1.)</div>
<div class="t" style="right:1391.5px;top:231.3px;text-align:right;font-size:9.5px;line-height:11px;color:#333;letter-spacing:0.150px;margin-right:-0.150px;">InterneRef / Version:</div>
<div class="t" style="left:185px;top:231.3px;font-size:9.5px;line-height:11px;color:#333;">0&nbsp; /&nbsp; 1</div>
<div class="t" style="right:1391.5px;top:246.7px;text-align:right;font-size:9.5px;line-height:11px;color:#333;color:#111;font-weight:bold;letter-spacing:0.276px;margin-right:-0.276px;-webkit-text-stroke:0;">Referenzdefinition:</div>
<div class="t" style="left:185px;top:246.7px;font-size:9.5px;line-height:11px;color:#333;color:#e8101a;font-weight:bold;letter-spacing:0.360px;-webkit-text-stroke:0;">Nicht erfüllt</div>
<div class="t" style="right:1391.5px;top:262.2px;text-align:right;font-size:9.5px;line-height:11px;color:#333;letter-spacing:0.077px;margin-right:-0.077px;">Kategorie der Falldefinition:</div>
<div class="t" style="left:185px;top:262.2px;font-size:9.5px;line-height:11px;color:#333;letter-spacing:0.315px;">-nicht ermittelbar-</div>
<div class="t" style="right:1391.5px;top:277.4px;text-align:right;font-size:9.5px;line-height:11px;color:#333;letter-spacing:0.115px;margin-right:-0.115px;">Klinisches Bild erfüllt:</div>
<div class="t" style="left:185px;top:277.4px;font-size:9.5px;line-height:11px;color:#333;">Nein</div>
<div class="t" style="right:1391.5px;top:293.0px;text-align:right;font-size:9.5px;line-height:11px;color:#333;letter-spacing:-0.009px;margin-right:0.009px;">Labordiagn. Nachweis gegeben:</div>
<div class="t" style="left:185px;top:293.0px;font-size:9.5px;line-height:11px;color:#333;">Nein</div>
<div class="t" style="right:1391.5px;top:308.5px;text-align:right;font-size:9.5px;line-height:11px;color:#333;letter-spacing:0.063px;margin-right:-0.063px;">Epid. Bestätigung gegeben:</div>
<div class="t" style="left:185px;top:308.5px;font-size:9.5px;line-height:11px;color:#333;">Nein</div>
<div class="t" style="right:1391.5px;top:323.7px;text-align:right;font-size:9.5px;line-height:11px;color:#333;color:#111;font-weight:bold;letter-spacing:0.325px;margin-right:-0.325px;-webkit-text-stroke:0;">Fall wird transportiert:</div>
<div class="t" style="left:185px;top:323.7px;font-size:9.5px;line-height:11px;color:#333;color:#e8101a;font-weight:bold;-webkit-text-stroke:0;">Nein</div>
<div class="t" style="right:1391.5px;top:340.0px;text-align:right;font-size:9.5px;line-height:11px;color:#333;color:#2e46c0;letter-spacing:-0.073px;margin-right:0.073px;">Freigabe des Falles:</div>
<div style="left:230px;top:213px;width:16px;height:16px;background:linear-gradient(#fafafa,#e4e4e4);border:1px solid #c4c4c4;border-radius:3px;"></div>
<div class="t" style="left:230.0px;top:214.5px;width:16px;text-align:center;font-size:11px;line-height:13px;color:#b0b0b0;"><span style="position:static">@</span></div>
<div style="left:185px;top:338px;width:92px;height:15px;background:#f2f2f2;border:1px solid #cdcdcd;border-radius:3px;"></div>
<div class="t" style="left:192px;top:340.0px;font-size:9.5px;line-height:11px;color:#a4a4a4;">automatisch</div>
<svg style="left:265px;top:344px" width="6" height="3"><path d="M0 0 L6 0 L3 3Z" fill="#b0b0b0"/></svg>
<div style="left:42px;top:361px;width:238px;height:31px;border:1px solid #a9c9f5;border-radius:5px;background:#fff;"></div>
<div style="left:45px;top:364px;width:232px;height:25px;background:linear-gradient(#c6dbf9,#dce8fc 28%,#d6e5fb 55%,#c2d7f8);border-radius:4px;"></div>
<svg style="left:47px;top:367px" width="19" height="19" viewBox="0 0 19 19"><rect x="0.5" y="0.5" width="18" height="18" rx="3" fill="#f08a28" stroke="#d06a10" stroke-width="0.6"/><circle cx="5" cy="14" r="2" fill="#fff"/><path d="M3 8 A8 8 0 0 1 11 16" stroke="#fff" stroke-width="2.2" fill="none"/><path d="M3 3.5 A12.5 12.5 0 0 1 15.5 16" stroke="#fff" stroke-width="2.2" fill="none"/></svg>
<div class="t" style="left:71.5px;top:371.0px;font-size:9.5px;line-height:11px;color:#151515;">RSS News-Feed</div>
<svg style="left:258.5px;top:369px" width="13" height="14" viewBox="0 0 13 14"><g transform="translate(0,14) scale(1,-1)" fill="#c4c8ce" stroke="#111" stroke-width="1"><path d="M0.8 6.2 L6.5 0.8 L12.2 6.2 L12.2 7.3 L9.8 7.3 L6.5 4.2 L3.2 7.3 L0.8 7.3Z"/><path d="M0.8 12.2 L6.5 6.8 L12.2 12.2 L12.2 13.3 L9.8 13.3 L6.5 10.2 L3.2 13.3 L0.8 13.3Z"/></g></svg>
<div style="left:42px;top:397px;width:238px;height:319px;border:1px solid #a9c9f5;border-radius:5px;background:#fff;"></div>
<div style="left:45px;top:400px;width:232px;height:31px;background:linear-gradient(#c6dbf9,#dce8fc 28%,#d6e5fb 55%,#c2d7f8);border-radius:4px;"></div>
<svg style="left:48px;top:407px" width="17" height="17" viewBox="0 0 17 17"><path d="M1 3.5 L4 1 L16 1 L13 3.5Z" fill="#e6eaf0" stroke="#7e8a98" stroke-width="0.8"/><path d="M1 3.5 L13 3.5 L13 16 L1 15Z" fill="#f6f4dc" stroke="#7e8a98" stroke-width="0.9"/><path d="M13 3.5 L16 1 L16 13 L13 16Z" fill="#bdb880" stroke="#7e8a98" stroke-width="0.8"/><path d="M2.5 4.5 H11.5 V7.5 H8.7 V14 H5.5 V7.5 H2.5Z" fill="#e4c21e"/><path d="M3 5 H11 V6 H3Z" fill="#fff6a0"/></svg>
<div class="t" style="left:71.5px;top:409.8px;font-size:9.5px;line-height:11px;color:#151515;">Annotationen (0)</div>
<div style="left:210px;top:403px;width:23px;height:24px;background:linear-gradient(#f2f2f2,#d6d6d6);border:1px solid #9c9c9c;border-radius:3px;"></div>
<svg style="left:214px;top:407px" width="15" height="15" viewBox="0 0 15 15"><rect x="1" y="1" width="13" height="13" fill="#fff" stroke="#6a8ab0" stroke-width="0.6"/><path d="M1 4.2 H14 M1 7.5 H14 M1 10.8 H14 M4.2 1 V14 M7.5 1 V14 M10.8 1 V14" stroke="#9ab0cc" stroke-width="0.6"/></svg>
<div style="left:235px;top:403px;width:23px;height:24px;background:linear-gradient(#f2f2f2,#d6d6d6);border:1px solid #9c9c9c;border-radius:3px;"></div>
<svg style="left:239px;top:407px" width="15" height="15" viewBox="0 0 15 15"><rect x="1" y="1" width="13" height="13" fill="#fff" stroke="#6a8ab0" stroke-width="0.6"/><path d="M7.5 2 L10 5 H5Z M7.5 13 L10 10 H5Z M2 7.5 L5 5 V10Z M13 7.5 L10 5 V10Z" fill="#1f6fd0"/></svg>
<svg style="left:258.5px;top:408px" width="13" height="14" viewBox="0 0 13 14"><g fill="#c4c8ce" stroke="#111" stroke-width="1" stroke-linejoin="miter"><path d="M0.8 6.2 L6.5 0.8 L12.2 6.2 L12.2 7.3 L9.8 7.3 L6.5 4.2 L3.2 7.3 L0.8 7.3Z"/><path d="M0.8 12.2 L6.5 6.8 L12.2 12.2 L12.2 13.3 L9.8 13.3 L6.5 10.2 L3.2 13.3 L0.8 13.3Z"/></g></svg>
<div style="left:46px;top:687px;width:56px;height:25px;background:linear-gradient(#f4f4f4,#e4e4e4 50%,#d8d8d8);border:1px solid #9e9e9e;border-radius:3px;"></div>
<svg style="left:57px;top:692px" width="15" height="15" viewBox="0 0 15 15"><rect x="2" y="1" width="9" height="12" fill="#dde4ee" stroke="#7a8aa0" stroke-width="0.6"/><path d="M8 7 H11 V10 H14 V13 H11 V16 H8 V13 H5 V10 H8Z" fill="#2fa52a"/></svg>
<div class="t" style="left:70px;top:694.0px;font-size:9.5px;line-height:11px;color:#151515;">Notiz</div>
<div style="left:103px;top:687px;width:57px;height:25px;background:linear-gradient(#f4f4f4,#e4e4e4 50%,#d8d8d8);border:1px solid #9e9e9e;border-radius:3px;"></div>
<svg style="left:106px;top:692px" width="15" height="15" viewBox="0 0 15 15"><path d="M1 4 L10 1 L13 9 L4 12Z" fill="#f0e080" stroke="#a09040" stroke-width="0.6"/><path d="M8 7 H11 V10 H14 V13 H11 V16 H8 V13 H5 V10 H8Z" fill="#2fa52a"/></svg>
<div class="t" style="left:120px;top:690px;font-size:9.5px;line-height:10px;color:#151515;letter-spacing:0.25px;">Kommen<br>tar</div>
<div style="left:162px;top:687px;width:56px;height:25px;background:linear-gradient(#f4f4f4,#e4e4e4 50%,#d8d8d8);border:1px solid #9e9e9e;border-radius:3px;"></div>
<svg style="left:165px;top:692px" width="15" height="15" viewBox="0 0 15 15"><rect x="1" y="1" width="10" height="10" fill="#f4d0d0" stroke="#a05050" stroke-width="0.6"/><rect x="3" y="3" width="3" height="3" fill="#c03030"/><path d="M8 7 H11 V10 H14 V13 H11 V16 H8 V13 H5 V10 H8Z" fill="#2fa52a"/></svg>
<div class="t" style="left:179px;top:694.0px;font-size:9.5px;line-height:11px;color:#151515;">Aufgabe</div>
<div style="left:220px;top:687px;width:57px;height:25px;background:linear-gradient(#f4f4f4,#e4e4e4 50%,#d8d8d8);border:1px solid #9e9e9e;border-radius:3px;"></div>
<svg style="left:224px;top:692px" width="15" height="15" viewBox="0 0 15 15"><rect x="1" y="3" width="10" height="8" fill="#e8d870" stroke="#908040" stroke-width="0.6"/><rect x="3" y="1" width="8" height="6" fill="#f4ec9a" stroke="#908040" stroke-width="0.5"/><path d="M8 7 H11 V10 H14 V13 H11 V16 H8 V13 H5 V10 H8Z" fill="#2fa52a"/></svg>
<div class="t" style="left:238px;top:694.0px;font-size:9.5px;line-height:11px;color:#151515;">Anhang</div>
<div style="left:42px;top:722px;width:238px;height:180px;border:1px solid #a9c9f5;border-radius:5px;background:#fff;"></div>
<div style="left:45px;top:725px;width:232px;height:30px;background:linear-gradient(#c6dbf9,#dce8fc 28%,#d6e5fb 55%,#c2d7f8);border-radius:4px;"></div>
<svg style="left:49px;top:730px" width="15" height="19" viewBox="0 0 15 19"><path d="M1 1 L12.5 1.5 L14.5 3 L14.5 18.5 L12 17.5 L1 17Z" fill="#6a7078"/><path d="M1 1.5 L12.5 2 L12.5 17.5 L1 17Z" fill="#eef1f6" stroke="#7a8088" stroke-width="0.8"/><path d="M3.3 3 V15.5" stroke="#e8a8a8" stroke-width="1.2"/><path d="M1.5 16 L12 16.5" stroke="#fff" stroke-width="0.8"/></svg>
<div class="t" style="left:71.5px;top:734.5px;font-size:9.5px;line-height:11px;color:#151515;">Protokoll (0)</div>
<div style="left:235px;top:728px;width:23px;height:23px;background:linear-gradient(#f2f2f2,#d6d6d6);border:1px solid #9c9c9c;border-radius:3px;"></div>
<svg style="left:239px;top:732px" width="15" height="15" viewBox="0 0 15 15"><rect x="1" y="1" width="13" height="13" fill="#fff" stroke="#6a8ab0" stroke-width="0.6"/><path d="M7.5 2 L10 5 H5Z M7.5 13 L10 10 H5Z M2 7.5 L5 5 V10Z M13 7.5 L10 5 V10Z" fill="#1f6fd0"/></svg>
<svg style="left:258.5px;top:733px" width="13" height="14" viewBox="0 0 13 14"><g fill="#c4c8ce" stroke="#111" stroke-width="1" stroke-linejoin="miter"><path d="M0.8 6.2 L6.5 0.8 L12.2 6.2 L12.2 7.3 L9.8 7.3 L6.5 4.2 L3.2 7.3 L0.8 7.3Z"/><path d="M0.8 12.2 L6.5 6.8 L12.2 12.2 L12.2 13.3 L9.8 13.3 L6.5 10.2 L3.2 13.3 L0.8 13.3Z"/></g></svg>
<svg style="left:323.5px;top:175px" width="16" height="21" viewBox="0 0 18 23"><path d="M1 2 L11 2 L15 6 L15 22 L1 22Z" fill="#fbfbfb" stroke="#bdbdbd" stroke-width="0.8"/><circle cx="14" cy="4.5" r="3.6" fill="#f9b428"/><circle cx="14" cy="4.5" r="1.5" fill="#fff3c0"/></svg>
<div class="t" style="left:346.5px;top:177.5px;font-size:13.5px;line-height:16px;color:#111;letter-spacing:0.171px;">Neuer Datensatz</div>
<div style="left:313px;top:206px;width:1204px;height:26px;background:#e3eefc;border-radius:4px;"></div>
<div class="t" style="left:313.8px;top:211.8px;font-size:11.3px;line-height:14px;color:#111;letter-spacing:0.110px;">Navigieren zu</div>
<svg style="left:388px;top:211px" width="14" height="15" viewBox="0 0 14 15"><rect x="1" y="1" width="9" height="12" fill="#8fdc7a" stroke="#6a8a60" stroke-width="0.6"/><path d="M3 4 H8 M3 6.5 H8 M3 9 H8" stroke="#2e4a2a" stroke-width="0.8"/></svg>
<div class="t" style="left:399.8px;top:213.3px;font-size:9.5px;line-height:11px;color:#151515;">Zuordnung</div>
<svg style="left:452.5px;top:211px" width="14" height="15" viewBox="0 0 14 15"><g transform="scale(0.72)"><path d="M1.5 9 Q0.5 0.8 6.5 0.8 Q12 0.8 11.5 8 L11 13.5 L2.5 12.5Z" fill="#2a2a2a"/><ellipse cx="5.2" cy="8.8" rx="3.1" ry="4" fill="#a86a38"/><path d="M1 16.5 Q1 12.5 4.5 12 L9 12 Q12.5 12.5 12.8 16.5 Q12.5 19.5 7 19.5 Q1.5 19.5 1 16.5Z" fill="#d8481c"/><path d="M3.2 12.5 Q5.5 17 9.2 12.3" stroke="#f2c828" stroke-width="1" fill="none"/></g></svg>
<div class="t" style="left:465.3px;top:213.3px;font-size:9.5px;line-height:11px;color:#151515;">Patient/in</div>
<svg style="left:512.5px;top:211px" width="14" height="15" viewBox="0 0 14 15"><path d="M1 14 Q1 8 6 8 Q11 8 11 14Z" fill="#cfe0f0" stroke="#7a9ab8" stroke-width="0.5"/><ellipse cx="6" cy="4.5" rx="3" ry="3.5" fill="#eab97a"/><path d="M3 3 Q6 -1 9 3Z" fill="#6b4a1e"/><circle cx="6" cy="11" r="1.2" fill="#e04040"/></svg>
<div class="t" style="left:525.5px;top:213.3px;font-size:9.5px;line-height:11px;color:#151515;">Klinik</div>
<svg style="left:556px;top:211px" width="14" height="15" viewBox="0 0 14 15"><path d="M4 1 L7 1 L7 5 L9 7 L8 14 L3 14 L2 7 L4 5Z" fill="#4a6a6a"/><path d="M3 9 L8 9" stroke="#9ac" stroke-width="1"/></svg>
<div class="t" style="left:568.5px;top:213.3px;font-size:9.5px;line-height:11px;color:#151515;">Labor</div>
<svg style="left:599px;top:211px" width="14" height="15" viewBox="0 0 14 15"><circle cx="6.5" cy="7.5" r="6" fill="#6fa8dc" stroke="#3a6ea8" stroke-width="0.6"/><path d="M3 5 Q6 3 8 6 Q6 9 3 5Z" fill="#e8f0f8"/></svg>
<div class="t" style="left:611.5px;top:213.3px;font-size:9.5px;line-height:11px;color:#151515;">Epi</div>
<svg style="left:633.7px;top:211px" width="14" height="15" viewBox="0 0 14 15"><path d="M1 13 L10 4" stroke="#3a3a3a" stroke-width="1.6"/><path d="M10 1 L11 3.5 L13.5 4 L11 5 L10 7.5 L9 5 L6.5 4 L9 3.5Z" fill="#f5c518"/></svg>
<div class="t" style="left:646.7px;top:213.3px;font-size:9.5px;line-height:11px;color:#151515;">Zusatz</div>
<div style="left:1519px;top:234px;width:13px;height:649px;background:#ececec;"></div>
<div style="left:1532px;top:141px;width:1px;height:742px;background:#c4c4c4;"></div>
<svg style="left:1523px;top:239px" width="5" height="3"><path d="M0 3 L5 3 L3 0Z" fill="#555"/></svg>
<div style="left:1519px;top:247px;width:12px;height:317px;background:linear-gradient(90deg,#fafafa,#f0f0f0 45%,#d2d2d2 55%,#cacaca);border:1px solid #a9a9a9;border-radius:2px;"></div>
<div style="left:1523px;top:402px;width:5px;height:1px;background:#777;"></div>
<div style="left:1523px;top:404px;width:5px;height:1px;background:#777;"></div>
<div style="left:1523px;top:406px;width:5px;height:1px;background:#777;"></div>
<svg style="left:1523px;top:873px" width="6" height="4"><path d="M0 0 L6 0 L3 4Z" fill="#606060"/></svg>
<div style="left:313px;top:236px;width:1203px;height:166px;border:1px solid #a9c9f5;border-radius:5px;background:#fff;"></div>
<div style="left:316px;top:239px;width:1197px;height:25px;background:linear-gradient(#c6dbf9,#dce8fc 28%,#d6e5fb 55%,#c2d7f8);border-radius:4px;"></div>
<svg style="left:320px;top:243px" width="15" height="18" viewBox="0 0 15 18"><rect x="0.5" y="0.5" width="14" height="17" fill="#8ee07a" stroke="#777" stroke-width="0.8"/><path d="M2.5 3 H8 M2.5 6 H8 M2.5 9 H8 M2.5 12 H8 M2.5 15 H8" stroke="#2e5a2a" stroke-width="1"/><path d="M9.5 3 H13 M9.5 6 H13 M9.5 9 H13 M9.5 12 H13" stroke="#d8f8d0" stroke-width="0.8"/></svg>
<div class="t" style="left:342.4px;top:246.0px;font-size:9.5px;line-height:11px;color:#151515;">Zuordnung</div>
<svg style="left:1495.0px;top:244.5px" width="13" height="14" viewBox="0 0 13 14"><g fill="#c4c8ce" stroke="#111" stroke-width="1" stroke-linejoin="miter"><path d="M0.8 6.2 L6.5 0.8 L12.2 6.2 L12.2 7.3 L9.8 7.3 L6.5 4.2 L3.2 7.3 L0.8 7.3Z"/><path d="M0.8 12.2 L6.5 6.8 L12.2 12.2 L12.2 13.3 L9.8 13.3 L6.5 10.2 L3.2 13.3 L0.8 13.3Z"/></g></svg>
<div class="t" style="right:1132px;top:266.8px;text-align:right;font-size:9.5px;line-height:11px;color:#151515;letter-spacing:0.076px;margin-right:-0.076px;">Aktenzeichen:</div>
<div style="left:441px;top:265px;width:1055px;height:15px;background:#fff;border:1px solid #dde3ea;border-top:1px solid #c2cad4;"></div>
<div class="t" style="left:444px;top:267.0px;font-size:9.5px;line-height:11px;color:#151515;">CVD2024-0123</div>
<div style="left:1497px;top:265px;width:16px;height:15px;background:linear-gradient(#f4f4f4,#dcdcdc);border:1px solid #9e9e9e;border-radius:3px;"></div>
<svg style="left:1500px;top:267px" width="11" height="11" viewBox="0 0 11 11"><rect x="0.5" y="0.5" width="10" height="10" fill="#3a78c8"/><rect x="2" y="2" width="3" height="7" fill="#fff"/><circle cx="8" cy="8" r="2.2" fill="#b0c8e8"/></svg>
<div class="t" style="right:1132px;top:282.7px;text-align:right;font-size:9.5px;line-height:11px;color:#151515;">Meldedatum:</div>
<div style="left:441px;top:281px;width:934px;height:16px;background:#fff;border:1px solid #dde3ea;border-top:1px solid #c2cad4;border:1px solid #b4c4d4;"></div>
<div class="t" style="left:443px;top:282.0px;font-size:9.5px;line-height:11px;color:#151515;">30.05.2024</div>
<svg style="left:1356px;top:282px;opacity:1" width="16" height="15" viewBox="0 0 16 15"><rect x="0.5" y="0.5" width="15" height="14" fill="#fff" stroke="#6e7e92" stroke-width="0.9"/><rect x="1" y="1" width="14" height="3" fill="#4a86d0"/><text x="8" y="13" font-size="8.5" text-anchor="middle" font-family="Liberation Sans" fill="#222">15</text></svg>
<div class="t" style="left:1376px;top:283.5px;font-size:9.5px;line-height:11px;color:#151515;letter-spacing:-0.173px;">Woche:&nbsp;22&nbsp;Wochenjahr:&nbsp;2024</div>
<div class="t" style="right:1132px;top:300.7px;text-align:right;font-size:9.5px;line-height:11px;color:#151515;">Landkreis:</div>
<div style="left:441px;top:299px;width:976px;height:15px;background:linear-gradient(#f6f6f6,#e6e6e6 45%,#d6d6d6 55%,#dadada);border:1px solid #a6a6a6;border-bottom-color:#8a8a8a;border-radius:3px;"></div>
<svg style="left:1405px;top:305.0px" width="7" height="4"><path d="M0 0 L7 0 L3.5 4Z" fill="#111"/></svg>
<div class="t" style="left:447px;top:301.0px;font-size:9.5px;line-height:11px;color:#222;">SK Berlin Mitte</div>
<div class="t" style="left:1417.6px;top:300.5px;font-size:9.5px;line-height:11px;color:#2e46c0;">Bundesland:</div>
<div class="t" style="left:1471px;top:300.5px;font-size:9.5px;line-height:11px;color:#151515;">Berlin</div>
<div class="t" style="right:1132px;top:317.6px;text-align:right;font-size:9.5px;line-height:11px;color:#151515;">Meldung:</div>
<div style="left:441px;top:316px;width:1055px;height:15px;background:linear-gradient(#f6f6f6,#e6e6e6 45%,#d6d6d6 55%,#dadada);border:1px solid #a6a6a6;border-bottom-color:#8a8a8a;border-radius:3px;"></div>
<svg style="left:1484px;top:322.0px" width="7" height="4"><path d="M0 0 L7 0 L3.5 4Z" fill="#111"/></svg>
<div class="t" style="left:447px;top:318.0px;font-size:9.5px;line-height:11px;color:#222;">Ja</div>
<div class="t" style="right:1132px;top:334.2px;text-align:right;font-size:9.5px;line-height:11px;color:#151515;">Meldungen:</div>
<div style="left:440px;top:331px;width:1057px;height:18px;background:linear-gradient(#fbfbfb,#f1f1f1);border:1px solid #d6dde6;border-left:1px solid #8aa4c4;border-bottom:1px solid #8aa4c4;"></div>
<div class="t" style="left:444px;top:334.5px;font-size:9.5px;line-height:11px;color:#151515;letter-spacing:0.025px;">Meldetatbestand</div>
<div style="left:518.6px;top:332px;width:1px;height:16px;background:#e2e2e2;"></div>
<div class="t" style="left:522.6px;top:334.5px;font-size:9.5px;line-height:11px;color:#151515;letter-spacing:0.016px;">Art des Meldenden</div>
<div style="left:605.4px;top:332px;width:1px;height:16px;background:#e2e2e2;"></div>
<div class="t" style="left:609.4px;top:334.5px;font-size:9.5px;line-height:11px;color:#151515;">Datum der Meldung</div>
<div style="left:697.4px;top:332px;width:1px;height:16px;background:#e2e2e2;"></div>
<div class="t" style="left:701.4px;top:334.5px;font-size:9.5px;line-height:11px;color:#151515;">Datum der Diagnose</div>
<div style="left:792.2px;top:332px;width:1px;height:16px;background:#e2e2e2;"></div>
<div class="t" style="left:796.2px;top:334.5px;font-size:9.5px;line-height:11px;color:#151515;letter-spacing:0.008px;">Meldung</div>
<div style="left:835.5px;top:332px;width:1px;height:16px;background:#e2e2e2;"></div>
<div class="t" style="left:839.5px;top:334.5px;font-size:9.5px;line-height:11px;color:#151515;">Via DEMIS</div>
<div style="left:887.9px;top:332px;width:1px;height:16px;background:#e2e2e2;"></div>
<div class="t" style="left:891.9px;top:334.5px;font-size:9.5px;line-height:11px;color:#151515;">Probenentnahme am</div>
<div style="left:983.2px;top:332px;width:1px;height:16px;background:#e2e2e2;"></div>
<div style="left:441px;top:350px;width:53px;height:17px;background:linear-gradient(#f4f4f4,#dedede);border:1px solid #8e8e8e;border-radius:3px;"></div>
<svg style="left:443px;top:351px;opacity:1" width="14" height="14" viewBox="0 0 14 14"><rect x="1" y="1" width="10" height="12" fill="#a8e090" stroke="#7a9a70" stroke-width="0.6"/><path d="M3 4 H8 M3 6.5 H8 M3 9 H7" stroke="#3a5a3a" stroke-width="0.8"/><path d="M8 6.5 H10.5 V9 H13 V11.5 H10.5 V14 H8 V11.5 H5.5 V9 H8Z" fill="#2fa52a"/></svg>
<div class="t" style="left:457px;top:353.0px;font-size:9.5px;line-height:11px;color:#151515;letter-spacing:0.008px;">Meldung</div>
<div style="left:497px;top:350px;width:97px;height:17px;background:linear-gradient(#f8f8f8,#e8e8e8);border:1px solid #cfcfcf;border-radius:3px;"></div>
<svg style="left:499px;top:351px;opacity:0.55" width="14" height="14" viewBox="0 0 14 14"><rect x="1" y="1" width="10" height="12" fill="#a8e090" stroke="#7a9a70" stroke-width="0.6"/><path d="M3 4 H8 M3 6.5 H8 M3 9 H7" stroke="#3a5a3a" stroke-width="0.8"/><path d="M7 8 L12.5 13.5 M12.5 8 L7 13.5" stroke="#e03030" stroke-width="1.6"/></svg>
<div class="t" style="left:513px;top:353.0px;font-size:9.5px;line-height:11px;color:#8e8e8e;letter-spacing:0.067px;">Meldung entfernen</div>
<div class="t" style="right:1132px;top:370.3px;text-align:right;font-size:9.5px;line-height:11px;color:#151515;letter-spacing:0.024px;margin-right:-0.024px;">Übernahme von GA:</div>
<div style="left:442px;top:368px;width:488px;height:15px;background:#fff;border:1px solid #dde3ea;border-top:1px solid #c2cad4;"></div>
<div class="t" style="left:446px;top:370.3px;font-size:9.5px;line-height:11px;color:#151515;">0.</div>
<div class="t" style="left:931.7px;top:370.3px;font-size:9.5px;line-height:11px;color:#151515;">Übergabe an GA:</div>
<div style="left:1007px;top:368px;width:490px;height:15px;background:#fff;border:1px solid #dde3ea;border-top:1px solid #c2cad4;"></div>
<div class="t" style="left:1010px;top:370.0px;font-size:9.5px;line-height:11px;color:#151515;">0.</div>
<div class="t" style="left:316px;top:385.3px;font-size:9.5px;line-height:11px;color:#151515;letter-spacing:0.093px;">Beteiligte Gesundheitsämter:</div>
<div style="left:313px;top:406px;width:1203px;height:352px;border:1px solid #a9c9f5;border-radius:5px;background:#fff;"></div>
<div style="left:316px;top:409px;width:1197px;height:25px;background:linear-gradient(#c6dbf9,#dce8fc 28%,#d6e5fb 55%,#c2d7f8);border-radius:4px;"></div>
<svg style="left:320px;top:411.5px" width="14" height="20" viewBox="0 0 14 20"><defs><linearGradient id="hairg" x1="0" y1="0" x2="1" y2="1"><stop offset="0" stop-color="#6a6a6a"/><stop offset="1" stop-color="#151515"/></linearGradient><linearGradient id="bodyg" x1="0" y1="0" x2="1" y2="1"><stop offset="0" stop-color="#f06a2a"/><stop offset="1" stop-color="#a8300f"/></linearGradient></defs><path d="M1.5 9 Q0.5 0.8 6.5 0.8 Q12 0.8 11.5 8 L11 13.5 L2.5 12.5Z" fill="url(#hairg)"/><ellipse cx="5.2" cy="8.8" rx="3.1" ry="4" fill="#a86a38"/><path d="M1 16.5 Q1 12.5 4.5 12 L9 12 Q12.5 12.5 12.8 16.5 Q12.5 19.5 7 19.5 Q1.5 19.5 1 16.5Z" fill="url(#bodyg)"/><path d="M3.2 12.5 Q5.5 17 9.2 12.3" stroke="#f2c828" stroke-width="1" fill="none"/></svg>
<div class="t" style="left:342.7px;top:416.4px;font-size:9.5px;line-height:11px;color:#151515;letter-spacing:0.132px;">Informationen zum Patienten/zur Patientin</div>
<svg style="left:1495.0px;top:414.5px" width="13" height="14" viewBox="0 0 13 14"><g fill="#c4c8ce" stroke="#111" stroke-width="1" stroke-linejoin="miter"><path d="M0.8 6.2 L6.5 0.8 L12.2 6.2 L12.2 7.3 L9.8 7.3 L6.5 4.2 L3.2 7.3 L0.8 7.3Z"/><path d="M0.8 12.2 L6.5 6.8 L12.2 12.2 L12.2 13.3 L9.8 13.3 L6.5 10.2 L3.2 13.3 L0.8 13.3Z"/></g></svg>
<div class="t" style="right:986px;top:437.2px;text-align:right;font-size:9.5px;line-height:11px;color:#151515;letter-spacing:0.061px;margin-right:-0.061px;">Gemeindekennziffer:</div>
<div style="left:588px;top:435px;width:925px;height:15px;background:#fff;border:1px solid #dde3ea;border-top:1px solid #c2cad4;"></div>
<div class="t" style="right:986px;top:454.1px;text-align:right;font-size:9.5px;line-height:11px;color:#151515;">Geschlecht:</div>
<div style="left:588px;top:452px;width:925px;height:15px;background:linear-gradient(#f6f6f6,#e6e6e6 45%,#d6d6d6 55%,#dadada);border:1px solid #a6a6a6;border-bottom-color:#8a8a8a;border-radius:3px;"></div>
<svg style="left:1501px;top:458.0px" width="7" height="4"><path d="M0 0 L7 0 L3.5 4Z" fill="#111"/></svg>
<div class="t" style="left:594px;top:454.0px;font-size:9.5px;line-height:11px;color:#f01418;letter-spacing:0.214px;">-nicht erhoben-</div>
<div class="t" style="right:986px;top:471.5px;text-align:right;font-size:9.5px;line-height:11px;color:#151515;letter-spacing:0.173px;margin-right:-0.173px;">Geburtsjahr, -monat:</div>
<div style="left:588px;top:469px;width:77px;height:16px;background:linear-gradient(#f6f6f6,#e6e6e6 45%,#d6d6d6 55%,#dadada);border:1px solid #a6a6a6;border-bottom-color:#8a8a8a;border-radius:3px;"></div>
<svg style="left:653px;top:475.5px" width="7" height="4"><path d="M0 0 L7 0 L3.5 4Z" fill="#111"/></svg>
<div class="t" style="left:594px;top:471.5px;font-size:9.5px;line-height:11px;color:#222;">1980</div>
<div style="left:668px;top:469px;width:740px;height:16px;background:linear-gradient(#f6f6f6,#e6e6e6 45%,#d6d6d6 55%,#dadada);border:1px solid #a6a6a6;border-bottom-color:#8a8a8a;border-radius:3px;"></div>
<svg style="left:1396px;top:475.5px" width="7" height="4"><path d="M0 0 L7 0 L3.5 4Z" fill="#111"/></svg>
<div class="t" style="left:674px;top:471.5px;font-size:9.5px;line-height:11px;color:#222;">Januar</div>
<div class="t" style="right:59.5px;top:471.5px;text-align:right;font-size:9.5px;line-height:11px;color:#151515;letter-spacing:0.140px;margin-right:-0.140px;">Alter (berechnet):&nbsp;44</div>
<div class="t" style="right:986px;top:489.3px;text-align:right;font-size:9.5px;line-height:11px;color:#151515;">verstorben:</div>
<div style="left:588px;top:487px;width:925px;height:15px;background:linear-gradient(#f6f6f6,#e6e6e6 45%,#d6d6d6 55%,#dadada);border:1px solid #a6a6a6;border-bottom-color:#8a8a8a;border-radius:3px;"></div>
<svg style="left:1501px;top:493.0px" width="7" height="4"><path d="M0 0 L7 0 L3.5 4Z" fill="#111"/></svg>
<div class="t" style="left:594px;top:489.0px;font-size:9.5px;line-height:11px;color:#222;">Nein</div>
<div class="t" style="right:895px;top:506.2px;text-align:right;font-size:9.5px;line-height:11px;color:#8a8a8a;letter-spacing:-0.007px;margin-right:0.007px;">Datum des Todes:</div>
<div style="left:679px;top:504px;width:401px;height:15px;background:#fff;border:1px solid #dde3ea;border-top:1px solid #c2cad4;border-color:#e0e0e0;"></div>
<div class="t" style="left:680px;top:505.5px;font-size:9.5px;line-height:11px;color:#b4b4b4;">Datum wählen</div>
<svg style="left:1062px;top:504px;opacity:0.5" width="16" height="15" viewBox="0 0 16 15"><rect x="0.5" y="0.5" width="15" height="14" fill="#fff" stroke="#6e7e92" stroke-width="0.9"/><rect x="1" y="1" width="14" height="3" fill="#4a86d0"/><text x="8" y="13" font-size="8.5" text-anchor="middle" font-family="Liberation Sans" fill="#222">15</text></svg>
<div class="t" style="left:1081px;top:506.2px;font-size:9.5px;line-height:11px;color:#666;">Grund:</div>
<div style="left:1112px;top:504px;width:401px;height:15px;background:#f2f2f2;border:1px solid #d4d4d4;border-radius:3px;"></div>
<svg style="left:1502px;top:510.5px" width="6" height="3"><path d="M0 0 L6 0 L3 3Z" fill="#b8b8b8"/></svg>
<div class="t" style="left:1118px;top:506.0px;font-size:9.5px;line-height:11px;color:#9a9a9a;letter-spacing:0.214px;">-nicht erhoben-</div>
<div class="t" style="right:986px;top:523.5px;text-align:right;font-size:9.5px;line-height:11px;color:#151515;">Hospitalisierung:</div>
<div style="left:588px;top:522px;width:925px;height:14px;background:linear-gradient(#f6f6f6,#e6e6e6 45%,#d6d6d6 55%,#dadada);border:1px solid #a6a6a6;border-bottom-color:#8a8a8a;border-radius:3px;"></div>
<svg style="left:1501px;top:527.5px" width="7" height="4"><path d="M0 0 L7 0 L3.5 4Z" fill="#111"/></svg>
<div class="t" style="left:594px;top:523.5px;font-size:9.5px;line-height:11px;color:#f01418;letter-spacing:0.214px;">-nicht erhoben-</div>
<div class="t" style="right:986px;top:539.5px;text-align:right;font-size:9.5px;line-height:11px;color:#151515;letter-spacing:0.061px;margin-right:-0.061px;">Hospitalisierungen:</div>
<div style="left:601px;top:537px;width:913px;height:18px;background:linear-gradient(#fbfbfb,#f1f1f1);border:1px solid #d6dde6;border-left:1px solid #8aa4c4;border-bottom:1px solid #8aa4c4;"></div>
<div class="t" style="left:605px;top:540.5px;font-size:9.5px;line-height:11px;color:#151515;">von</div>
<div style="left:624.9px;top:538px;width:1px;height:16px;background:#e2e2e2;"></div>
<div class="t" style="left:628.9px;top:540.5px;font-size:9.5px;line-height:11px;color:#151515;">bis</div>
<div style="left:644.1px;top:538px;width:1px;height:16px;background:#e2e2e2;"></div>
<div class="t" style="left:648.1px;top:540.5px;font-size:9.5px;line-height:11px;color:#151515;">Grund</div>
<div style="left:678.3px;top:538px;width:1px;height:16px;background:#e2e2e2;"></div>
<div class="t" style="left:682.3px;top:540.5px;font-size:9.5px;line-height:11px;color:#151515;">Region</div>
<div style="left:714.1px;top:538px;width:1px;height:16px;background:#e2e2e2;"></div>
<div class="t" style="left:718.1px;top:540.5px;font-size:9.5px;line-height:11px;color:#151515;">Intensivstation</div>
<div style="left:785.7px;top:538px;width:1px;height:16px;background:#e2e2e2;"></div>
<div class="t" style="left:789.7px;top:540.5px;font-size:9.5px;line-height:11px;color:#151515;">ITS von</div>
<div style="left:825.8px;top:538px;width:1px;height:16px;background:#e2e2e2;"></div>
<div class="t" style="left:829.8px;top:540.5px;font-size:9.5px;line-height:11px;color:#151515;">ITS bis</div>
<div style="left:862.7px;top:538px;width:1px;height:16px;background:#e2e2e2;"></div>
<div style="left:602px;top:557px;width:86px;height:16px;background:linear-gradient(#f8f8f8,#e8e8e8);border:1px solid #cfcfcf;border-radius:3px;"></div>
<svg style="left:604px;top:558px;opacity:0.55" width="14" height="14" viewBox="0 0 14 14"><path d="M1 3 L7 1 L7 13 L1 12Z" fill="#dfe6ee" stroke="#8a98a8" stroke-width="0.5"/><path d="M7 1 L13 3 L13 12 L7 13Z" fill="#c2ccd8" stroke="#8a98a8" stroke-width="0.5"/><path d="M8 6.5 H10.5 V9 H13 V11.5 H10.5 V14 H8 V11.5 H5.5 V9 H8Z" fill="#2fa52a"/></svg>
<div class="t" style="left:618px;top:559.5px;font-size:9.5px;line-height:11px;color:#8e8e8e;letter-spacing:0.080px;">Hospitalisierung</div>
<div style="left:690px;top:557px;width:130px;height:16px;background:linear-gradient(#f8f8f8,#e8e8e8);border:1px solid #cfcfcf;border-radius:3px;"></div>
<svg style="left:692px;top:558px;opacity:0.55" width="14" height="14" viewBox="0 0 14 14"><path d="M1 3 L7 1 L7 13 L1 12Z" fill="#dfe6ee" stroke="#8a98a8" stroke-width="0.5"/><path d="M7 1 L13 3 L13 12 L7 13Z" fill="#c2ccd8" stroke="#8a98a8" stroke-width="0.5"/><path d="M7 8 L12.5 13.5 M12.5 8 L7 13.5" stroke="#e03030" stroke-width="1.6"/></svg>
<div class="t" style="left:706px;top:559.5px;font-size:9.5px;line-height:11px;color:#8e8e8e;">Hospitalisierung entfernen</div>
<div class="t" style="right:986px;top:581.5px;text-align:right;font-size:9.5px;line-height:11px;color:#151515;letter-spacing:0.159px;margin-right:-0.159px;">Informationen zur Betreuung/Unterbringung/Tätigkeit bekannt:</div>
<div style="left:588px;top:580px;width:925px;height:15px;background:linear-gradient(#f6f6f6,#e6e6e6 45%,#d6d6d6 55%,#dadada);border:1px solid #a6a6a6;border-bottom-color:#8a8a8a;border-radius:3px;"></div>
<svg style="left:1501px;top:586.0px" width="7" height="4"><path d="M0 0 L7 0 L3.5 4Z" fill="#111"/></svg>
<div class="t" style="left:594px;top:582.0px;font-size:9.5px;line-height:11px;color:#f01418;letter-spacing:0.214px;">-nicht erhoben-</div>
<div class="t" style="right:986px;top:598.1px;text-align:right;font-size:9.5px;line-height:11px;color:#151515;letter-spacing:0.138px;margin-right:-0.138px;">Betreuung/Unterbringung/Tätigkeit in Einrichtung:</div>
<div style="left:601px;top:596px;width:913px;height:18px;background:linear-gradient(#fbfbfb,#f1f1f1);border:1px solid #d6dde6;border-left:1px solid #8aa4c4;border-bottom:1px solid #8aa4c4;"></div>
<div class="t" style="left:605px;top:599.5px;font-size:9.5px;line-height:11px;color:#151515;">am/von</div>
<div style="left:641.4px;top:597px;width:1px;height:16px;background:#e2e2e2;"></div>
<div class="t" style="left:645.4px;top:599.5px;font-size:9.5px;line-height:11px;color:#151515;">bis</div>
<div style="left:662.3px;top:597px;width:1px;height:16px;background:#e2e2e2;"></div>
<div class="t" style="left:666.3px;top:599.5px;font-size:9.5px;line-height:11px;color:#151515;">als</div>
<div style="left:681.5px;top:597px;width:1px;height:16px;background:#e2e2e2;"></div>
<div class="t" style="left:685.5px;top:599.5px;font-size:9.5px;line-height:11px;color:#151515;">Art der Einrichtung</div>
<div style="left:769.2px;top:597px;width:1px;height:16px;background:#e2e2e2;"></div>
<div style="left:602px;top:616px;width:116px;height:16px;background:linear-gradient(#f8f8f8,#e8e8e8);border:1px solid #cfcfcf;border-radius:3px;"></div>
<svg style="left:604px;top:617px;opacity:0.55" width="14" height="14" viewBox="0 0 14 14"><rect x="2" y="1" width="8" height="12" fill="#c8d4e4" stroke="#8898b0" stroke-width="0.5"/><circle cx="6" cy="4" r="2" fill="#e0b080"/><path d="M8 6.5 H10.5 V9 H13 V11.5 H10.5 V14 H8 V11.5 H5.5 V9 H8Z" fill="#2fa52a"/></svg>
<div class="t" style="left:618px;top:618.5px;font-size:9.5px;line-height:11px;color:#8e8e8e;">Einrichtung hinzufügen</div>
<div style="left:720px;top:616px;width:110px;height:16px;background:linear-gradient(#f8f8f8,#e8e8e8);border:1px solid #cfcfcf;border-radius:3px;"></div>
<svg style="left:722px;top:617px;opacity:0.55" width="14" height="14" viewBox="0 0 14 14"><rect x="2" y="1" width="8" height="12" fill="#c8d4e4" stroke="#8898b0" stroke-width="0.5"/><circle cx="6" cy="4" r="2" fill="#e0b080"/><path d="M7 8 L12.5 13.5 M12.5 8 L7 13.5" stroke="#e03030" stroke-width="1.6"/></svg>
<div class="t" style="left:736px;top:618.5px;font-size:9.5px;line-height:11px;color:#8e8e8e;">Einrichtung entfernen</div>
<div style="left:589px;top:639px;width:10px;height:10px;background:linear-gradient(135deg,#dcdcdc,#fafafa);border:1px solid #a8a8a8;"></div>
<div class="t" style="left:601px;top:638.0px;font-size:9.5px;line-height:11px;color:#151515;letter-spacing:0.091px;">Nosokomialer Ausbruch (z.B. §6 Abs. 3 IfSG)</div>
<div class="t" style="right:971px;top:652.3px;text-align:right;font-size:9.5px;line-height:11px;color:#8a8a8a;">Umfeld:</div>
<div style="left:603px;top:651px;width:910px;height:15px;background:#f2f2f2;border:1px solid #d4d4d4;border-radius:3px;"></div>
<svg style="left:1502px;top:657.5px" width="6" height="3"><path d="M0 0 L6 0 L3 3Z" fill="#b8b8b8"/></svg>
<div class="t" style="left:609px;top:653.0px;font-size:9.5px;line-height:11px;color:#9a9a9a;letter-spacing:0.214px;">-nicht erhoben-</div>
<div class="t" style="right:985px;top:670.1px;text-align:right;font-size:9.5px;line-height:11px;color:#151515;letter-spacing:0.064px;margin-right:-0.064px;">Blut-/Organ-/Gewebespende in den letzten 6 Monaten?</div>
<div style="left:589px;top:669px;width:924px;height:15px;background:linear-gradient(#f6f6f6,#e6e6e6 45%,#d6d6d6 55%,#dadada);border:1px solid #a6a6a6;border-bottom-color:#8a8a8a;border-radius:3px;"></div>
<svg style="left:1501px;top:675.0px" width="7" height="4"><path d="M0 0 L7 0 L3.5 4Z" fill="#111"/></svg>
<div class="t" style="left:592px;top:671.0px;font-size:9.5px;line-height:11px;color:#f01418;letter-spacing:0.214px;">-nicht erhoben-</div>
<div class="t" style="right:985px;top:688.6px;text-align:right;font-size:9.5px;line-height:11px;color:#151515;">Jemals geimpft?</div>
<div style="left:589px;top:688px;width:924px;height:15px;background:linear-gradient(#f6f6f6,#e6e6e6 45%,#d6d6d6 55%,#dadada);border:1px solid #a6a6a6;border-bottom-color:#8a8a8a;border-radius:3px;"></div>
<svg style="left:1501px;top:694.0px" width="7" height="4"><path d="M0 0 L7 0 L3.5 4Z" fill="#111"/></svg>
<div class="t" style="left:592px;top:690.0px;font-size:9.5px;line-height:11px;color:#f01418;letter-spacing:0.214px;">-nicht erhoben-</div>
<div class="t" style="right:971px;top:706.8px;text-align:right;font-size:9.5px;line-height:11px;color:#8a8a8a;">Impfungen:</div>
<div class="t" style="left:602px;top:706.8px;font-size:9.5px;line-height:11px;color:#8a8a8a;letter-spacing:0.160px;">-keine Einträge vorhanden-</div>
<div style="left:603px;top:720px;width:104px;height:16px;background:linear-gradient(#f8f8f8,#e8e8e8);border:1px solid #cfcfcf;border-radius:3px;"></div>
<svg style="left:605px;top:721px;opacity:0.55" width="14" height="14" viewBox="0 0 14 14"><path d="M1 13 L9 5" stroke="#7a8a9a" stroke-width="2"/><path d="M8 2 L12 6" stroke="#9aa" stroke-width="2"/><path d="M8 6.5 H10.5 V9 H13 V11.5 H10.5 V14 H8 V11.5 H5.5 V9 H8Z" fill="#2fa52a"/></svg>
<div class="t" style="left:619px;top:722.5px;font-size:9.5px;line-height:11px;color:#8e8e8e;">Impfung hinzufügen</div>
<div style="left:709px;top:720px;width:98px;height:16px;background:linear-gradient(#f8f8f8,#e8e8e8);border:1px solid #cfcfcf;border-radius:3px;"></div>
<svg style="left:711px;top:721px;opacity:0.55" width="14" height="14" viewBox="0 0 14 14"><path d="M1 13 L9 5" stroke="#7a8a9a" stroke-width="2"/><path d="M8 2 L12 6" stroke="#9aa" stroke-width="2"/><path d="M7 8 L12.5 13.5 M12.5 8 L7 13.5" stroke="#e03030" stroke-width="1.6"/></svg>
<div class="t" style="left:725px;top:722.5px;font-size:9.5px;line-height:11px;color:#8e8e8e;">Impfung entfernen</div>
<div class="t" style="right:985px;top:740.3px;text-align:right;font-size:9.5px;line-height:11px;color:#151515;">Fall bekannt durch:</div>
<div style="left:589px;top:740px;width:924px;height:15px;background:linear-gradient(#f6f6f6,#e6e6e6 45%,#d6d6d6 55%,#dadada);border:1px solid #a6a6a6;border-bottom-color:#8a8a8a;border-radius:3px;"></div>
<svg style="left:1501px;top:746.0px" width="7" height="4"><path d="M0 0 L7 0 L3.5 4Z" fill="#111"/></svg>
<div class="t" style="left:592px;top:742.0px;font-size:9.5px;line-height:11px;color:#f01418;letter-spacing:0.214px;">-nicht erhoben-</div>
<div style="left:313px;top:765px;width:1203px;height:127px;border:1px solid #a9c9f5;border-radius:5px;background:#fff;"></div>
<div style="left:316px;top:768px;width:1197px;height:23px;background:linear-gradient(#c6dbf9,#dce8fc 28%,#d6e5fb 55%,#c2d7f8);border-radius:4px;"></div>
<svg style="left:318px;top:770px" width="16" height="20" viewBox="0 0 16 20"><path d="M1 20 Q1 12 8 12 Q15 12 15 20Z" fill="#d6e4f2" stroke="#7a9ab8" stroke-width="0.6"/><ellipse cx="8" cy="7" rx="3.8" ry="4.3" fill="#eab97a"/><path d="M4 5 Q8 0 12 5 L12 3 Q8 -1 4 3Z" fill="#5a4a2a"/><circle cx="6" cy="16" r="1.6" fill="#e05050"/><path d="M8 12 L8 17" stroke="#6a8aaa" stroke-width="0.8"/></svg>
<div class="t" style="left:342.7px;top:774.1px;font-size:9.5px;line-height:11px;color:#151515;">Klinische Informationen</div>
<svg style="left:1495.0px;top:772.5px" width="13" height="14" viewBox="0 0 13 14"><g fill="#c4c8ce" stroke="#111" stroke-width="1" stroke-linejoin="miter"><path d="M0.8 6.2 L6.5 0.8 L12.2 6.2 L12.2 7.3 L9.8 7.3 L6.5 4.2 L3.2 7.3 L0.8 7.3Z"/><path d="M0.8 12.2 L6.5 6.8 L12.2 12.2 L12.2 13.3 L9.8 13.3 L6.5 10.2 L3.2 13.3 L0.8 13.3Z"/></g></svg>
<div class="t" style="right:1107px;top:794.1px;text-align:right;font-size:9.5px;line-height:11px;color:#151515;letter-spacing:0.143px;margin-right:-0.143px;">Klinische Informationen verfügbar:</div>
<div style="left:467px;top:794px;width:1046px;height:15px;background:linear-gradient(#f6f6f6,#e6e6e6 45%,#d6d6d6 55%,#dadada);border:1px solid #a6a6a6;border-bottom-color:#8a8a8a;border-radius:3px;"></div>
<svg style="left:1501px;top:800.0px" width="7" height="4"><path d="M0 0 L7 0 L3.5 4Z" fill="#111"/></svg>
<div class="t" style="left:470px;top:796.0px;font-size:9.5px;line-height:11px;color:#f01418;letter-spacing:0.214px;">-nicht erhoben-</div>
<div class="t" style="right:1093px;top:812.2px;text-align:right;font-size:9.5px;line-height:11px;color:#8a8a8a;letter-spacing:0.053px;margin-right:-0.053px;">Erkrankungsbeginn:</div>
<div style="left:480px;top:811px;width:1033px;height:16px;background:#fff;border:1px solid #dde3ea;border-top:1px solid #c2cad4;border-color:#e0e0e0;"></div>
<div class="t" style="left:481.5px;top:812.5px;font-size:9.5px;line-height:11px;color:#b4b4b4;">Datum wählen</div>
<svg style="left:1495px;top:811px;opacity:0.5" width="16" height="15" viewBox="0 0 16 15"><rect x="0.5" y="0.5" width="15" height="14" fill="#fff" stroke="#6e7e92" stroke-width="0.9"/><rect x="1" y="1" width="14" height="3" fill="#4a86d0"/><text x="8" y="13" font-size="8.5" text-anchor="middle" font-family="Liberation Sans" fill="#222">15</text></svg>
<div class="t" style="left:480.3px;top:827.5px;font-size:9.5px;line-height:11px;color:#8a8a8a;letter-spacing:0.104px;"><u>Akute respiratorische Symptome</u></div>
<div style="left:495px;top:840.3px;width:10px;height:10px;background:#fff;border:1px solid #b8b8b8;"></div>
<div class="t" style="left:508.4px;top:839.3px;font-size:9.5px;line-height:11px;color:#8a8a8a;letter-spacing:0.048px;">Halsschmerzen/-entzündung</div>
<div style="left:495px;top:852.1px;width:10px;height:10px;background:#fff;border:1px solid #b8b8b8;"></div>
<div class="t" style="left:508.4px;top:851.1px;font-size:9.5px;line-height:11px;color:#8a8a8a;">Husten</div>
<div style="left:495px;top:863.8px;width:10px;height:10px;background:#fff;border:1px solid #b8b8b8;"></div>
<div class="t" style="left:508.4px;top:862.8px;font-size:9.5px;line-height:11px;color:#8a8a8a;letter-spacing:0.019px;">Pneumonie (Lungenentzündung)</div>
<div style="left:495px;top:875.5px;width:10px;height:10px;background:#fff;border:1px solid #b8b8b8;"></div>
<div class="t" style="left:508.4px;top:874.5px;font-size:9.5px;line-height:11px;color:#8a8a8a;">Schnupfen</div>
<div style="left:39px;top:883px;width:1494px;height:21px;background:#f0eeed;border-top:1px solid #c8c8c8;border-bottom:1px solid #d8d8d8;border-left:1px solid #d8d8d8;border-right:1px solid #d8d8d8;"></div>
<div style="left:78px;top:885px;width:1px;height:18px;background:#b4b4b4;"></div>
<div class="t" style="left:44.8px;top:890.0px;font-size:9.5px;line-height:11px;color:#151515;">Bereit</div>
<div class="t" style="left:82px;top:890.0px;font-size:9.5px;line-height:11px;color:#151515;letter-spacing:0.130px;">Webservice: deaktiviert</div>
<div style="left:1459px;top:885px;width:1px;height:18px;background:#b4b4b4;"></div>
<div class="t" style="right:117px;top:890.0px;text-align:right;font-size:9.5px;line-height:11px;color:#151515;letter-spacing:0.261px;margin-right:-0.261px;">Berlin (1.)</div>
<div class="t" style="left:1467.7px;top:890.0px;font-size:9.5px;line-height:11px;color:#151515;letter-spacing:-0.007px;">SurvNetDemo</div>
</body></html>
